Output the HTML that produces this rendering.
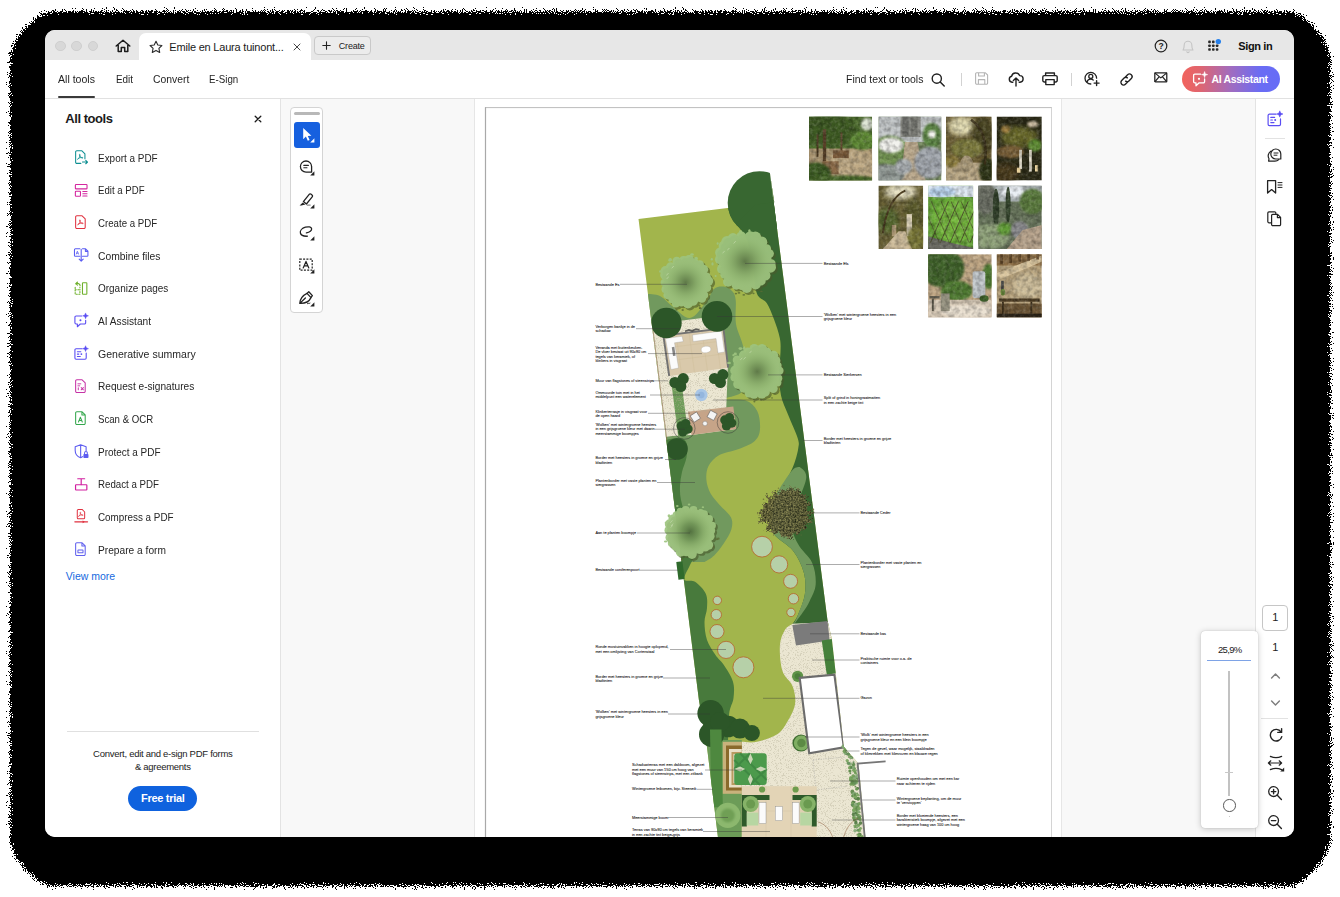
<!DOCTYPE html>
<html>
<head>
<meta charset="utf-8">
<style>
*{box-sizing:border-box;margin:0;padding:0}
html,body{width:1340px;height:897px;overflow:hidden;background:#fff;font-family:"Liberation Sans",sans-serif;color:#222}
#shadow{position:absolute;left:9px;top:12px;width:1320px;height:873px;background:#000;border-radius:46px}
#win{position:absolute;left:45.3px;top:30px;width:1249px;height:806.6px;background:#fff;border-radius:10px;overflow:hidden}
#titlebar{position:absolute;left:0;top:0;width:1250px;height:29.6px;background:#e7e7e7}
.tl{position:absolute;top:10.6px;width:10.4px;height:10.4px;border-radius:50%;background:#d8d8d8;border:0.5px solid #cfcfcf}
#tab{position:absolute;left:94px;top:3px;width:172px;height:27px;background:#fff;border-radius:7px 7px 0 0}
#tab .t{position:absolute;left:30px;top:7.8px;font-size:11px;color:#1a1a1a;white-space:nowrap;letter-spacing:-0.2px}
#create{position:absolute;left:269px;top:6px;width:57px;height:19px;border:1px solid #c9c9c9;border-radius:4px;background:#ececec;font-size:9px;color:#222}
#toolbar{position:absolute;left:0;top:29.6px;width:1250px;height:39.4px;background:#fff;border-bottom:1px solid #e1e1e1}
.menu{position:absolute;top:13.5px;font-size:11px;color:#1f1f1f;white-space:nowrap;transform-origin:0 0}
#left{position:absolute;left:0;top:69px;width:236px;height:738px;background:#fff;border-right:1px solid #e3e3e3}
.tool{position:absolute;left:52.8px;font-size:10.5px;color:#262626;white-space:nowrap;line-height:14px;transform-origin:0 0}
.ico{position:absolute;left:27.9px;width:16.4px;height:16.4px}
#main{position:absolute;left:236px;top:69px;width:974px;height:738px;background:#f8f8f8}
#right{position:absolute;left:1209.5px;top:69px;width:41px;height:738px;background:#fff;border-left:1px solid #e3e3e3}
svg{position:absolute;overflow:visible}
.s{fill:none;stroke-linecap:round;stroke-linejoin:round}
</style>
</head>
<body>
<svg style="left:0;top:0" width="1340" height="897" viewBox="0 0 1340 897"><defs><filter id="dith" x="0" y="0" width="1340" height="897" filterUnits="userSpaceOnUse" color-interpolation-filters="sRGB"><feGaussianBlur in="SourceAlpha" stdDeviation="1.9 2.7" result="a"/><feTurbulence type="fractalNoise" baseFrequency="0.9" numOctaves="1" seed="4" result="n0"/><feComponentTransfer in="n0" result="n"><feFuncA type="linear" slope="2.6" intercept="-0.8"/></feComponentTransfer><feComposite in="a" in2="n" operator="arithmetic" k1="0" k2="1" k3="0.9" k4="-0.44" result="c"/><feComponentTransfer in="c" result="t"><feFuncA type="discrete" tableValues="0 1"/></feComponentTransfer><feFlood flood-color="#000"/><feComposite in2="t" operator="in"/></filter></defs><path d="M10 57.3 C10 40.7 36.9 11.3 52 11.3 H1288.3 C1303.4 11.3 1330.3 40.7 1330.3 57.3 V840 C1330.3 856.6 1303.4 886 1288.3 886 H52 C36.9 886 10 856.6 10 840 Z" fill="#000" filter="url(#dith)"/></svg>
<div id="win">
<div id="titlebar">
  <div class="tl" style="left:10px"></div><div class="tl" style="left:26px"></div><div class="tl" style="left:42.5px"></div>
  <svg style="left:70px;top:9px" width="16" height="14" viewBox="0 0 16 14"><path class="s" d="M1.2 7 L8 1.2 L14.8 7 M3.2 6 V12.4 H6.3 V8.6 H9.7 V12.4 H12.8 V6" stroke="#1c1c1c" stroke-width="1.5"/></svg>
  <div id="tab">
    <svg style="left:9.5px;top:6.5px" width="14" height="14" viewBox="0 0 14 14"><path class="s" d="M7 1.2 L8.8 5 L12.9 5.5 L9.9 8.3 L10.7 12.4 L7 10.4 L3.3 12.4 L4.1 8.3 L1.1 5.5 L5.2 5 Z" stroke="#2a2a2a" stroke-width="1.1"/></svg>
    <div class="t">Emile en Laura tuinont...</div>
    <svg style="left:154px;top:9.5px" width="8" height="8" viewBox="0 0 8 8"><path class="s" d="M1 1 L7 7 M7 1 L1 7" stroke="#3c3c3c" stroke-width="0.95"/></svg>
  </div>
  <div id="create">
    <svg style="left:7px;top:4px" width="9" height="9" viewBox="0 0 9 9"><path class="s" d="M4.5 0.8 V8.2 M0.8 4.5 H8.2" stroke="#222" stroke-width="1.1"/></svg>
    <span style="position:absolute;left:23.5px;top:3.5px;letter-spacing:-0.2px">Create</span>
  </div>
  <!-- right side -->
  <svg style="left:1109px;top:9px" width="14" height="14" viewBox="0 0 14 14"><circle cx="7" cy="7" r="5.8" fill="none" stroke="#222" stroke-width="1.2"/><text x="7" y="10" font-size="8.5" font-weight="bold" text-anchor="middle" fill="#222" font-family="Liberation Sans">?</text></svg>
  <svg style="left:1136px;top:9px" width="14" height="15" viewBox="0 0 14 15"><path class="s" d="M2 11 C3.2 9.5 3.2 8 3.2 6 A3.8 3.8 0 0 1 10.8 6 C10.8 8 10.8 9.5 12 11 Z M5.8 12.8 A1.3 1.3 0 0 0 8.2 12.8" stroke="#c4c4c4" stroke-width="1.1"/></svg>
  <svg style="left:1162px;top:9px" width="16" height="14" viewBox="0 0 16 14">
    <g fill="#2a2a2a"><rect x="1.2" y="1.6" width="2.6" height="2.6" rx="0.8"/><rect x="5" y="1.6" width="2.6" height="2.6" rx="0.8"/>
    <rect x="1.2" y="5.4" width="2.6" height="2.6" rx="0.8"/><rect x="5" y="5.4" width="2.6" height="2.6" rx="0.8"/><rect x="8.8" y="5.4" width="2.6" height="2.6" rx="0.8"/>
    <rect x="1.2" y="9.2" width="2.6" height="2.6" rx="0.8"/><rect x="5" y="9.2" width="2.6" height="2.6" rx="0.8"/><rect x="8.8" y="9.2" width="2.6" height="2.6" rx="0.8"/></g>
    <circle cx="11.3" cy="2.6" r="2.7" fill="#2680eb"/></svg>
  <div style="position:absolute;left:1193px;top:10px;font-size:11px;font-weight:bold;color:#111;white-space:nowrap;letter-spacing:-0.38px">Sign in</div>
</div>
<div id="toolbar">
  <div class="menu" style="left:13.2px;transform:scaleX(0.96)">All tools</div>
  <div class="menu" style="left:70.4px;transform:scaleX(0.90)">Edit</div>
  <div class="menu" style="left:107.7px;transform:scaleX(0.942)">Convert</div>
  <div class="menu" style="left:163.6px;transform:scaleX(0.885)">E-Sign</div>
  <div style="position:absolute;left:13px;top:36.4px;width:37px;height:2px;background:#3a3a3a;border-radius:1px"></div>
  <div class="menu" style="left:801px;transform:scaleX(0.952)">Find text or tools</div>
  <!-- search -->
  <svg style="left:885px;top:12.4px" width="16" height="16" viewBox="0 0 16 16"><circle cx="6.8" cy="6.6" r="4.6" fill="none" stroke="#222" stroke-width="1.4"/><path class="s" d="M10.2 10 L14.2 14" stroke="#222" stroke-width="1.5"/></svg>
  <div style="position:absolute;left:916px;top:13.4px;width:1px;height:13px;background:#d2d2d2"></div>
  <!-- save (disabled) -->
  <svg style="left:930px;top:12.9px" width="14" height="13" viewBox="0 0 14 13"><path class="s" d="M1.6 0.8 H10.4 L12.6 3 V11 A1.2 1.2 0 0 1 11.4 12.2 H1.8 A1.2 1.2 0 0 1 0.6 11 V1.8 A1 1 0 0 1 1.6 0.8 Z M3.6 0.8 V4 H9.4 V0.8 M3.4 12 V7.6 H9.8 V12" stroke="#b4b4b4" stroke-width="1.1"/></svg>
  <!-- cloud upload -->
  <svg style="left:963px;top:12.4px" width="16" height="15" viewBox="0 0 16 15"><path class="s" d="M4.8 10.2 H4 A3 3 0 0 1 3.6 4.3 A4.2 4.2 0 0 1 11.6 3.6 A3.3 3.3 0 0 1 12 10.2 H11.2 M8 14 V6.2 M5.4 8.6 L8 6 L10.6 8.6" stroke="#222" stroke-width="1.4"/></svg>
  <!-- printer -->
  <svg style="left:997px;top:12.9px" width="16" height="14" viewBox="0 0 16 14"><path class="s" d="M3.6 3.6 V1 H12.4 V3.6 M3.6 10 H2.2 A1.4 1.4 0 0 1 0.8 8.6 V5 A1.4 1.4 0 0 1 2.2 3.6 H13.8 A1.4 1.4 0 0 1 15.2 5 V8.6 A1.4 1.4 0 0 1 13.8 10 H12.4 M3.8 7.6 H12.2 V12.6 H3.8 Z" stroke="#222" stroke-width="1.4"/></svg>
  <div style="position:absolute;left:1026px;top:13.4px;width:1px;height:13px;background:#d2d2d2"></div>
  <!-- share person -->
  <svg style="left:1039px;top:11.9px" width="17" height="16" viewBox="0 0 17 16"><path class="s" d="M12.6 7.2 A5.8 5.8 0 1 0 6.8 13 M3 11 C3.6 9 5.2 8.2 6.8 8.2 C7.8 8.2 8.6 8.5 9.2 9" stroke="#222" stroke-width="1.3"/><circle cx="6.8" cy="5.4" r="2" fill="none" stroke="#222" stroke-width="1.3"/><path class="s" d="M12.6 9.6 V14.6 M10.1 12.1 H15.1" stroke="#222" stroke-width="1.4"/></svg>
  <!-- link -->
  <svg style="left:1074px;top:12.4px" width="15" height="15" viewBox="0 0 15 15"><path class="s" d="M6.2 5.2 L8.6 2.8 A2.6 2.6 0 0 1 12.3 6.5 L9.9 8.9 A2.6 2.6 0 0 1 6.6 9.2 M8.8 9.8 L6.4 12.2 A2.6 2.6 0 0 1 2.7 8.5 L5.1 6.1 A2.6 2.6 0 0 1 8.4 5.8" stroke="#222" stroke-width="1.4"/></svg>
  <!-- mail -->
  <svg style="left:1108.5px;top:12.6px" width="13.6" height="11" viewBox="0 0 15 12"><rect x="0.9" y="0.9" width="13.2" height="9.8" rx="0.6" fill="none" stroke="#222" stroke-width="1.4"/><path class="s" d="M1.2 1.2 L7.5 6.4 L13.8 1.2 M1.2 10.4 L5.6 5.4 M13.8 10.4 L9.4 5.4" stroke="#222" stroke-width="1.3"/></svg>
  <!-- AI Assistant button -->
  <div style="position:absolute;left:1137px;top:6.4px;width:98px;height:26px;border-radius:13px;background:linear-gradient(90deg,#f2635c 0%,#e0656f 18%,#a06cc0 50%,#6a6cf4 80%,#666cf6 100%)">
    <svg style="left:10px;top:5px" width="17" height="17" viewBox="0 0 17 17"><path class="s" d="M8.6 3.2 H2.8 A1.2 1.2 0 0 0 1.6 4.4 V10.6 A1.2 1.2 0 0 0 2.8 11.8 H4 V14.8 L7.2 11.8 H11.4 A1.2 1.2 0 0 0 12.6 10.6 V8" stroke="#fff" stroke-width="1.3"/><circle cx="7" cy="7.8" r="1.1" fill="#fff"/><path d="M12.6 0.6 L13.3 2.9 L15.6 3.6 L13.3 4.3 L12.6 6.6 L11.9 4.3 L9.6 3.6 L11.9 2.9 Z" fill="#fff" stroke="#fff" stroke-width="0.6" stroke-linejoin="round"/></svg>
    <div style="position:absolute;left:29.3px;top:7px;font-size:10.5px;font-weight:bold;color:#fff;white-space:nowrap;letter-spacing:-0.36px">AI Assistant</div>
  </div>
</div>
<div id="left">
<div style="position:absolute;left:20px;top:12px;font-size:13px;font-weight:bold;color:#1b1b1b;letter-spacing:-0.45px;white-space:nowrap">All tools</div>
<svg style="left:208.5px;top:16.2px" width="8" height="8" viewBox="0 0 8 8"><path class="s" d="M1.2 1.2 L6.8 6.8 M6.8 1.2 L1.2 6.8" stroke="#1b1b1b" stroke-width="1.3"/></svg>
<svg class="ico" style="top:49.8px" viewBox="0 0 18 18" stroke="#0e8f92"><path class="s" d="M8.6 15.8 H4.2 A1.3 1.3 0 0 1 2.9 14.5 V3.3 A1.3 1.3 0 0 1 4.2 2 H9.8 L13.1 5.3 V10.6" stroke-width="1.15"/><path class="s" transform="translate(5.3,5.6) scale(1)" d="M0 5.4 C1.6 4.8 2.5 2.2 2.5 0.8 C2.5 0 1.7 0 1.7 0.8 C1.7 2.4 3.8 4.4 5.2 4.4 C6 4.4 5.8 3.6 4.8 3.6 C3.2 3.6 1 4.2 0 5.4 Z" stroke-width="0.9"/><path class="s" d="M10.4 14.3 H16 M14 12.4 L16 14.3 L14 16.2" stroke-width="1.2"/></svg>
<div class="tool" style="top:51.5px;transform:scaleX(0.947)">Export a PDF</div>
<svg class="ico" style="top:82.5px" viewBox="0 0 18 18" stroke="#d4269f"><rect class="s" x="2.6" y="2.8" width="12.8" height="4.8" rx="0.8" stroke-width="1.2"/><rect class="s" x="2.6" y="10.2" width="5.6" height="5.4" rx="0.8" stroke-width="1.2"/><path class="s" d="M10.8 10.4 H15.4 M10.8 12.9 H15.4 M10.8 15.4 H15.4" stroke-width="1.2"/></svg>
<div class="tool" style="top:84.2px;transform:scaleX(0.916)">Edit a PDF</div>
<svg class="ico" style="top:115.1px" viewBox="0 0 18 18" stroke="#e0313f"><path class="s" d="M4.2 2 H10 L13.4 5.4 V14.6 A1.3 1.3 0 0 1 12.1 15.9 H4.2 A1.3 1.3 0 0 1 2.9 14.6 V3.3 A1.3 1.3 0 0 1 4.2 2 Z" stroke-width="1.15"/><path class="s" transform="translate(5.5,6.2) scale(1)" d="M0 5.4 C1.6 4.8 2.5 2.2 2.5 0.8 C2.5 0 1.7 0 1.7 0.8 C1.7 2.4 3.8 4.4 5.2 4.4 C6 4.4 5.8 3.6 4.8 3.6 C3.2 3.6 1 4.2 0 5.4 Z" stroke-width="0.9"/></svg>
<div class="tool" style="top:116.8px;transform:scaleX(0.921)">Create a PDF</div>
<svg class="ico" style="top:147.8px" viewBox="0 0 18 18" stroke="#5a5cf2"><path class="s" d="M7.6 10.2 H2.6 A1 1 0 0 1 1.6 9.2 V3 A1 1 0 0 1 2.6 2 H7.6 M10.4 2 H13.8 L16.4 4.6 V9.2 A1 1 0 0 1 15.4 10.2 H10.4 M13.6 2.2 V4.8 H16.2" stroke-width="1.15"/><path class="s" d="M9 2.4 V15.4 M6.8 13.4 L9 15.6 L11.2 13.4" stroke-width="1.2"/><path class="s" d="M3.6 7.8 L4.8 4.6 L6 7.8 M4 6.8 H5.6" stroke-width="0.8"/></svg>
<div class="tool" style="top:149.5px;transform:scaleX(0.982)">Combine files</div>
<svg class="ico" style="top:180.5px" viewBox="0 0 18 18" stroke="#6fb12c"><rect class="s" x="10.4" y="3" width="4.8" height="12.6" rx="0.6" stroke-width="1.2"/><path class="s" d="M2.4 8 V15.6 H7.6 V8" stroke-width="1.2" stroke-dasharray="1.2 1.7"/><path class="s" d="M2.4 10.6 H7.6" stroke-width="1.1" stroke-dasharray="1.2 1.7"/><path class="s" d="M7.8 6.4 C7.8 4 5.6 3.2 3.4 4 M4.8 2.2 L3 4.1 L5 5.6" stroke-width="1.2"/></svg>
<div class="tool" style="top:182.2px;transform:scaleX(0.948)">Organize pages</div>
<svg class="ico" style="top:213.2px" viewBox="0 0 18 18" stroke="#5a4df3"><path class="s" d="M9.6 4.4 H3.4 A1.3 1.3 0 0 0 2.1 5.7 V11.9 A1.3 1.3 0 0 0 3.4 13.2 H4.8 V16.2 L8 13.2 H12.6 A1.3 1.3 0 0 0 13.9 11.9 V9" stroke-width="1.2"/><circle cx="8.2" cy="9" r="1.1" fill="#5a4df3" stroke="none"/><path d="M13.8 1.0 L14.696000000000002 3.3040000000000003 L17.0 4.2 L14.696000000000002 5.096 L13.8 7.4 L12.904 5.096 L10.600000000000001 4.2 L12.904 3.3040000000000003 Z" fill="#5a4df3" stroke="#5a4df3" stroke-width="0.5" stroke-linejoin="round"/></svg>
<div class="tool" style="top:214.9px;transform:scaleX(0.966)">AI Assistant</div>
<svg class="ico" style="top:245.8px" viewBox="0 0 18 18" stroke="#5a4df3"><path class="s" d="M10 4.2 H3.4 A1.3 1.3 0 0 0 2.1 5.5 V14.3 A1.3 1.3 0 0 0 3.4 15.6 H13.2 A1.3 1.3 0 0 0 14.5 14.3 V8.8" stroke-width="1.2"/><path class="s" d="M4.8 7.4 H8.6 M4.8 10 H6.4 M4.8 12.6 H8" stroke-width="1.2"/><circle cx="9.2" cy="10" r="1" fill="#5a4df3" stroke="none"/><path d="M13.8 0.7999999999999998 L14.696000000000002 3.104 L17.0 4 L14.696000000000002 4.896 L13.8 7.2 L12.904 4.896 L10.600000000000001 4 L12.904 3.104 Z" fill="#5a4df3" stroke="#5a4df3" stroke-width="0.5" stroke-linejoin="round"/></svg>
<div class="tool" style="top:247.5px;transform:scaleX(1.002)">Generative summary</div>
<svg class="ico" style="top:278.5px" viewBox="0 0 18 18" stroke="#c633a6"><path class="s" d="M4.2 2 H10 L13.4 5.4 V14.6 A1.3 1.3 0 0 1 12.1 15.9 H4.2 A1.3 1.3 0 0 1 2.9 14.6 V3.3 A1.3 1.3 0 0 1 4.2 2 Z" stroke-width="1.15"/><path class="s" d="M5.4 6.4 H8.6 M5.4 8.6 H7.4" stroke-width="1"/><path class="s" d="M9 10.6 L11.4 13 M11.4 10.6 L9 13 M5.8 10.6 V13" stroke-width="1.1"/></svg>
<div class="tool" style="top:280.2px;transform:scaleX(0.964)">Request e-signatures</div>
<svg class="ico" style="top:311.2px" viewBox="0 0 18 18" stroke="#34a74d"><path class="s" d="M4.2 2 H10 L13.4 5.4 V14.6 A1.3 1.3 0 0 1 12.1 15.9 H4.2 A1.3 1.3 0 0 1 2.9 14.6 V3.3 A1.3 1.3 0 0 1 4.2 2 Z M9.8 2.2 V5.6 H13.2" stroke-width="1.15"/><path class="s" d="M6 13.2 L8.1 8 L10.2 13.2 M6.8 11.4 H9.4" stroke-width="1.1"/></svg>
<div class="tool" style="top:312.9px;transform:scaleX(0.918)">Scan &amp; OCR</div>
<svg class="ico" style="top:343.8px" viewBox="0 0 18 18" stroke="#5c5cf0"><path class="s" d="M10.6 15 C9.8 15.6 9 16 8.4 16.2 C4.6 14.8 2.4 12 2.4 8.2 V4.2 L8.4 2 L14.4 4.2 V8.4 M8.4 2.2 V16" stroke-width="1.2"/><rect x="11.4" y="12" width="5.6" height="4.6" rx="0.9" fill="#5c5cf0" stroke="none"/><path class="s" d="M12.7 12 V10.9 A1.5 1.5 0 0 1 15.7 10.9 V12" stroke-width="1.1"/></svg>
<div class="tool" style="top:345.5px;transform:scaleX(0.948)">Protect a PDF</div>
<svg class="ico" style="top:376.5px" viewBox="0 0 18 18" stroke="#d11fa0"><rect class="s" x="2.8" y="9.6" width="12.4" height="5.8" rx="0.6" stroke-width="1.3"/><path class="s" d="M5.2 3 H12.8 M9 3 V9.4" stroke-width="1.3"/></svg>
<div class="tool" style="top:378.2px;transform:scaleX(0.925)">Redact a PDF</div>
<svg class="ico" style="top:409.2px" viewBox="0 0 18 18" stroke="#e0313f"><path class="s" d="M5.8 1.6 H10 L12.8 4.4 V10.8 A1.1 1.1 0 0 1 11.7 11.9 H5.8 A1.1 1.1 0 0 1 4.7 10.8 V2.7 A1.1 1.1 0 0 1 5.8 1.6 Z" stroke-width="1.1"/><path class="s" transform="translate(6.3,4.4) scale(0.85)" d="M0 5.4 C1.6 4.8 2.5 2.2 2.5 0.8 C2.5 0 1.7 0 1.7 0.8 C1.7 2.4 3.8 4.4 5.2 4.4 C6 4.4 5.8 3.6 4.8 3.6 C3.2 3.6 1 4.2 0 5.4 Z" stroke-width="0.9"/><path class="s" d="M2 15.2 H16" stroke-width="1.2"/><path d="M10.6 13.6 L13 15.2 L10.6 16.8 Z" fill="#e0313f" stroke="none"/></svg>
<div class="tool" style="top:410.9px;transform:scaleX(0.938)">Compress a PDF</div>
<svg class="ico" style="top:441.8px" viewBox="0 0 18 18" stroke="#6161ee"><path class="s" d="M4.2 2 H10 L13.4 5.4 V14.6 A1.3 1.3 0 0 1 12.1 15.9 H4.2 A1.3 1.3 0 0 1 2.9 14.6 V3.3 A1.3 1.3 0 0 1 4.2 2 Z M9.8 2.2 V5.6 H13.2" stroke-width="1.15"/><rect class="s" x="5.4" y="10" width="5.6" height="3" rx="0.5" stroke-width="1.1"/></svg>
<div class="tool" style="top:443.5px;transform:scaleX(0.970)">Prepare a form</div>
<div style="position:absolute;left:20.5px;top:469.5px;font-size:10.5px;color:#1669de;white-space:nowrap;line-height:14px">View more</div>
<div style="position:absolute;left:22px;top:632px;width:192px;height:1px;background:#e0e0e0"></div>
<div style="position:absolute;left:0;top:649px;width:235px;text-align:center;font-size:9.5px;line-height:12.5px;color:#222;letter-spacing:-0.28px">Convert, edit and e-sign PDF forms<br>&amp; agreements</div>
<div style="position:absolute;left:83px;top:687px;width:69px;height:25px;border-radius:12.5px;background:#0f62de;color:#fff;font-size:11px;font-weight:bold;text-align:center;line-height:25px;letter-spacing:-0.3px">Free trial</div>
</div>
<div id="main">
<div style="position:absolute;left:9px;top:8.4px;width:33px;height:206px;background:#fff;border:1px solid #d4d4d4;border-radius:4px"></div>
<div style="position:absolute;left:13px;top:12.6px;width:25.5px;height:3px;border-radius:1.5px;background:#b8b8b8"></div>
<div style="position:absolute;left:12.7px;top:22.5px;width:26px;height:26px;border-radius:3px;background:#1660df"></div>
<svg style="left:16.0px;top:26.1px" width="19" height="19" viewBox="0 0 19 19"><path d="M6.2 3 L6.2 14.2 L8.9 11.6 L10.8 15.8 L12.6 15 L10.8 10.9 L14.4 10.7 Z" fill="#fff"/><path d="M17.4 13.2 V17.4 H13.2 Z" fill="#fff"/></svg>
<svg style="left:16.0px;top:59.1px" width="19" height="19" viewBox="0 0 19 19"><path class="s" d="M9 3 A5.6 5.6 0 1 0 9 14.2 H14.6 V8.6 A5.6 5.6 0 0 0 9 3 Z" stroke="#222" stroke-width="1.3"/><path class="s" d="M6.8 7.4 H11.4 M6.8 9.8 H10" stroke="#222" stroke-width="1.1"/><path d="M17.4 13.2 V17.4 H13.2 Z" fill="#222"/></svg>
<svg style="left:16.0px;top:92px" width="19" height="19" viewBox="0 0 19 19"><path class="s" d="M6.4 10.6 L12.2 3.4 A1.4 1.4 0 0 1 14.2 3.2 L15 3.9 A1.4 1.4 0 0 1 15.2 5.9 L9.4 13 Z" stroke="#222" stroke-width="1.3"/><path d="M5.8 11.4 L8.4 13.6 L4.4 14.4 L2.6 14.4 Z" fill="#222"/><path d="M9.8 14.2 H13.6" stroke="#888" stroke-width="1.3"/><path d="M17.4 13.2 V17.4 H13.2 Z" fill="#222"/></svg>
<svg style="left:16.0px;top:124.3px" width="19" height="19" viewBox="0 0 19 19"><path class="s" d="M9.4 9.8 C12.6 9.4 15 7.6 14.6 5.6 C14.2 3.8 11.4 3.4 8.4 4.2 C5 5.2 2.8 7.6 3.4 10 C4 12.2 7 13.4 10.4 13.2" stroke="#222" stroke-width="1.3"/><path d="M17.4 13.2 V17.4 H13.2 Z" fill="#222"/></svg>
<svg style="left:16.0px;top:156.8px" width="19" height="19" viewBox="0 0 19 19"><rect x="2.8" y="3.2" width="12.4" height="11" fill="none" stroke="#222" stroke-width="1.2" stroke-dasharray="2 1.3"/><path class="s" d="M6.2 12 L9 5.4 L11.8 12 M7.2 9.8 H10.8" stroke="#222" stroke-width="1.2"/><path d="M17.4 13.2 V17.4 H13.2 Z" fill="#222"/></svg>
<svg style="left:16.0px;top:190px" width="19" height="19" viewBox="0 0 19 19"><path class="s" d="M2.8 14.4 C3 10.4 5.6 6.6 10 4.4 L14 8.6 C12 12.8 8 14.6 2.8 14.4 Z M2.8 14.4 L8.4 9" stroke="#222" stroke-width="1.3"/><path class="s" d="M10.2 4.2 L11.8 2.8 L15.4 6.6 L14 8.4" stroke="#222" stroke-width="1.3"/><path class="s" d="M10.4 14.6 C11.4 13.6 12 15 13 14.2" stroke="#222" stroke-width="1"/><path d="M17.4 13.2 V17.4 H13.2 Z" fill="#222"/></svg>
<div style="position:absolute;left:192.4px;top:0;width:587.9px;height:738px;background:#fff;border-left:1px solid #e6e6e6;border-right:1px solid #e6e6e6"></div>
</div>
<svg style="left:-45px;top:-30px" width="1340" height="897" viewBox="0 0 1340 897">
<defs>
<clipPath id="pageclip"><rect x="485" y="107" width="567" height="731"/></clipPath>
<clipPath id="gclip"><polygon points="638.5,219 774.2,202.2 769.6,170.7 827.5,620.5 831.9,639 835.7,673.3 843.8,746.9 858.5,763.4 866.5,850 719.6,850 717.8,836 707,747 698.9,700"/></clipPath>
<filter id="spk" x="0" y="0" width="100%" height="100%"><feTurbulence type="fractalNoise" baseFrequency="1.4" numOctaves="1" seed="3" result="n"/><feColorMatrix in="n" type="matrix" values="0 0 0 0 0.45  0 0 0 0 0.42  0 0 0 0 0.3  0 0 0 -9 4.1"/><feComposite operator="in" in2="SourceGraphic"/></filter>
<filter id="b1"><feGaussianBlur stdDeviation="1.2"/></filter><filter id="b2"><feGaussianBlur stdDeviation="2.5"/></filter><filter id="b05"><feGaussianBlur stdDeviation="0.6"/></filter>
<radialGradient id="tree"><stop offset="0" stop-color="#5c7646" stop-opacity="0.95"/><stop offset="0.3" stop-color="#6f8f54" stop-opacity="0.75"/><stop offset="0.7" stop-color="#86ab66" stop-opacity="0.3"/><stop offset="1" stop-color="#9ec47f" stop-opacity="0"/></radialGradient>
<radialGradient id="tree2"><stop offset="0" stop-color="#4f6d3d" stop-opacity="0.95"/><stop offset="0.35" stop-color="#668a4e" stop-opacity="0.75"/><stop offset="0.75" stop-color="#86ab66" stop-opacity="0.3"/><stop offset="1" stop-color="#9ec47f" stop-opacity="0"/></radialGradient>
<radialGradient id="cedar"><stop offset="0" stop-color="#4a4a28"/><stop offset="0.6" stop-color="#5d5b33"/><stop offset="1" stop-color="#6f6c40" stop-opacity="0.85"/></radialGradient>
</defs>
<rect x="485.5" y="107.5" width="566" height="740" fill="#fff"/>
<path d="M485 107.6 H1052" stroke="#bcbcbc" stroke-width="1" fill="none"/>
<path d="M1051.5 107.5 V840" stroke="#d4d4d4" stroke-width="1" fill="none"/>
<path d="M485.5 107.2 V840" stroke="#a9a9a9" stroke-width="1.2" fill="none"/>
<g clip-path="url(#pageclip)">
<g clip-path="url(#gclip)">
<rect x="600" y="160" width="300" height="700" fill="#a2b54c"/>
<circle cx="759.5" cy="203" r="31.8" fill="#386731"/>
</g>
<clipPath id="rclip"><polygon points="600,160 768.2,160 857,850 600,850"/></clipPath>
<g clip-path="url(#rclip)"><circle cx="759.5" cy="203" r="31.8" fill="#386731"/></g>
<g clip-path="url(#gclip)">
<path d="M736 224 C737.8 226.7 744.2 232.7 747 240 C749.8 247.3 751.3 259.1 753 268 C754.7 276.9 754.7 287.9 757 293.7 C759.3 299.5 763.9 298.8 766.7 303 C769.5 307.2 771.7 313.2 773.9 319 C776.1 324.8 778.7 332.5 779.8 338 C780.9 343.5 780.6 346.3 780.5 352 C780.4 357.7 778.9 364.8 779 372 C779.1 379.2 779.5 388.4 781 395.5 C782.5 402.6 785.2 407.4 788 414.6 C790.8 421.8 796.1 432.9 797.8 438.5 C799.5 444.1 798.7 444.4 798.3 448 C797.9 451.6 796.7 456 795.4 460 C794.1 464 793 467.2 790.6 472 C788.2 476.8 783.6 484 781 488.7 C778.4 493.4 776.5 495.3 775 500 C773.5 504.7 772.2 511.3 772 517 C771.8 522.7 770.4 528.4 773.9 534 C777.4 539.6 788 544.3 793 550.7 C798 557.1 801.7 565 803.7 572.2 C805.7 579.4 805.9 586.5 804.9 593.7 C803.9 600.9 800.1 609.8 797.8 615.2 C795.5 620.6 792.1 624.2 791 626 L830 626 L830.4 620 L776.4 200 L760 200 Z" fill="#386731"/>
<path d="M800 467 C798.8 467.4 796.2 466.3 793 469.5 C789.8 472.7 784 481.6 781 486.3 C778 491.1 776.5 492.9 775 498 C773.5 503.1 772.2 511 772 517 C771.8 523 770.4 528.4 773.9 534 C777.4 539.6 788 544.3 793 550.7 C798 557.1 801.7 565 803.7 572.2 C805.7 579.4 805.9 586.5 804.9 593.7 C803.9 600.9 799.8 610 797.8 615.2 C795.8 620.4 793.8 623.2 793 624.8 L795.4 622.4 C796.6 620.8 800.1 616.4 802.5 612.8 C804.9 609.2 807.5 605.7 809.7 600.9 C811.9 596.1 815.3 590.6 815.7 584.2 C816.1 577.8 815.1 569.5 812.1 562.7 C809.1 555.9 801.1 550.7 797.8 543.6 C794.4 536.5 790.6 530.8 792 520 C793.4 509.2 804.8 487.9 806.1 479.1 C807.4 470.3 801 469 800 467 Z" fill="#71995e"/>
<path d="M645.9 293.7 C648.2 294.1 655.6 293.9 660 296 C664.4 298.1 667 302.3 672 306 C677 309.7 684.3 318.7 690 318 C695.7 317.3 702 306.8 706 302 C710 297.2 711 291.6 714 289 C717 286.4 720.7 286.3 723.7 286.6 C726.7 286.9 730 288.8 732 291 C734 293.2 735 294.5 735.7 300 C736.4 305.5 734.8 316.5 736 324 C737.2 331.5 740.8 337 742.8 345 C744.8 353 748.1 364.2 748 372 C747.9 379.8 746 387.5 742 392 C738 396.5 723.2 397.7 723.7 399.1 C724.2 400.5 739.6 398.3 745.2 400.3 C750.8 402.3 754.7 406.2 757.2 411 C759.7 415.8 760.4 424 760 429 C759.6 434 758.5 437.5 754.8 440.9 C751.1 444.3 744 446.9 738 449.3 C732 451.7 723.9 452.4 719 455.2 C714.1 458 710.6 461.9 708.5 466 C706.4 470.1 706 475.4 706.4 480 C706.8 484.6 708.3 489.2 710.6 493.4 C712.9 497.6 716.7 501.4 720.1 505.4 C723.5 509.4 729 513.3 730.9 517.3 C732.8 521.3 732.6 524.9 731.4 529.3 C730.2 533.7 726.6 539.2 723.7 543.6 C720.8 548 717.4 552.4 714.2 555.5 C711 558.6 706.2 560.9 704.6 562 L679.5 562 Z" fill="#71995e"/>
<path d="M664.2 440 C666.9 439.7 676.3 437.4 680 438 C683.7 438.6 685.6 440 686.7 443.3 C687.8 446.6 687.3 452.8 686.5 457.6 C685.7 462.4 683.1 467.3 682 472 C680.9 476.7 680.2 481.3 680 486 C679.8 490.7 680 495.2 681 500 C682 504.8 683.7 510.7 686 515 C688.3 519.3 692.7 521 695 526 C697.3 531 700.8 538.5 700 545 C699.2 551.5 692.6 559.3 690 565 C687.4 570.7 683.5 576.6 684.3 579.4 C685.1 582.2 691.4 579.4 695 581.8 C698.6 584.2 703.8 589.3 705.8 593.7 C707.8 598.1 707.2 603.3 707 608 C706.8 612.7 704.5 616.7 704.5 622 C704.5 627.3 705.2 634.5 707 640 C708.8 645.5 712.8 650.9 715.5 655 C718.2 659.1 720.6 660.1 723.5 664.5 C726.4 668.9 731.2 675.9 732.9 681.5 C734.6 687.1 734.1 692.5 733.5 697.9 C732.9 703.3 730 706.1 729.1 714 C728.2 721.9 728.2 739.8 728 745 L702.5 745 Z" fill="#487a3c"/>
<polygon points="650.4,324.5 702.2,317.9 722.5,328.2 727.8,368.1 726.1,412.2 736.2,429 691.5,434.9 672.4,436.1 664.9,437" fill="#ebe6d2"/>
<polygon points="670.8,378.6 680.8,377.3 688.2,434.6 678.2,436.2" fill="#6f9d5a"/>
<polygon points="687.9,411.8 733.3,406.5 736.2,429 691.5,434.9" fill="#c6a488"/>
<path d="M792.5 623.8 C791.2 624.8 787 626.4 784.9 630 C782.8 633.6 780.3 638.6 779.9 645.4 C779.5 652.2 780.3 663.9 782.4 670.7 C784.5 677.5 790.4 680.5 792.5 686 C794.6 691.5 795.9 697.8 795.1 703.7 C794.3 709.6 790.5 716.4 787.5 721.5 C784.5 726.6 782.4 730.8 777.3 734.2 C772.2 737.6 762.9 740.5 757 741.8 C751.1 743.1 744.3 741.8 741.8 741.8 L741.8 850 L870 850 L860 763 L845 747 L836 673 L830 622 Z" fill="#ebe6d2"/>
<polygon points="700,740 741.8,740 741.8,850 700,850" fill="#6c9c58"/>
<g filter="url(#spk)" opacity="0.38"><polygon points="650.4,324.5 702.2,317.9 722.5,328.2 727.8,368.1 726.1,412.2 688,412.2 672.4,436.1 664.9,437" fill="#000"/><path d="M792.5 623.8 C791.2 624.8 787 626.4 784.9 630 C782.8 633.6 780.3 638.6 779.9 645.4 C779.5 652.2 780.3 663.9 782.4 670.7 C784.5 677.5 790.4 680.5 792.5 686 C794.6 691.5 795.9 697.8 795.1 703.7 C794.3 709.6 790.5 716.4 787.5 721.5 C784.5 726.6 782.4 730.8 777.3 734.2 C772.2 737.6 762.9 740.5 757 741.8 C751.1 743.1 744.3 741.8 741.8 741.8 L741.8 850 L870 850 L860 763 L845 747 L836 673 L830 622 Z" fill="#000"/></g>
<polygon points="663.4,335.6 723.4,328.2 728.1,367.7 669.2,376" fill="#d9c9ab"/>
<path d="M676 334 L681.5 374 M689 332.5 L694.5 372.5 M702 331 L707.5 371 M715 329.3 L720.5 369 M665.2 348 L725 340.6 M667 361 L726.6 353.6" stroke="#cbb994" stroke-width="0.35" fill="none"/>
<polyline points="669.2,376 663.4,335.6 723.4,328.2 728.1,367.7" fill="none" stroke="#727272" stroke-width="1.9" stroke-linejoin="miter"/>
<polygon points="665.5,338.5 682,336.3 683.3,341.5 674.5,342.8 678.5,368 671,369.5" fill="#fbfbfb" stroke="#999" stroke-width="0.3"/>
<polygon points="692.5,335 721.5,331 724.5,352 718,353 716,338.5 693.2,341.5" fill="#fbfbfb" stroke="#999" stroke-width="0.3"/>
<ellipse cx="706" cy="349.5" rx="4.8" ry="3.2" fill="#fff" stroke="#aaa" stroke-width="0.3" transform="rotate(-8 706 349.5)"/>
<rect x="672.3" y="347" width="2.6" height="9" fill="#555" opacity="0.7" transform="rotate(-8 673 351)"/>
<path d="M685 331.3 l4 -1.4 l3 0.9 l4 -1.6 l3.5 0.6" stroke="#333" stroke-width="1.6" fill="none" opacity="0.75"/>
<path d="M652 322 L666.8 440" stroke="#8a6a4a" stroke-width="0.9" opacity="0.7"/>
<circle cx="666.4" cy="323" r="15.3" fill="#2c5628"/><circle cx="717" cy="316.4" r="15.3" fill="#2c5628"/>
<circle cx="674.9" cy="382.5" r="5.6" fill="#2c5628"/>
<circle cx="683.2" cy="378.7" r="5.6" fill="#2c5628"/>
<circle cx="680.8" cy="386.5" r="5.6" fill="#2c5628"/>
<circle cx="714.5" cy="378.5" r="5.6" fill="#2c5628"/>
<circle cx="722.8" cy="374.7" r="5.6" fill="#2c5628"/>
<circle cx="720.4" cy="382.5" r="5.6" fill="#2c5628"/>
<circle cx="701.3" cy="395" r="6.2" fill="#a9c6e6"/><circle cx="701.3" cy="395" r="3.2" fill="#8fb2dc" opacity="0.8"/>
<rect x="691.5" y="413.5" width="7.5" height="7.5" fill="#f4f4f4" stroke="#555" stroke-width="0.5" transform="rotate(-32 695 417)"/>
<rect x="708.5" y="411.5" width="7.5" height="7.5" fill="#f4f4f4" stroke="#555" stroke-width="0.5" transform="rotate(28 712 415)"/>
<circle cx="705" cy="423.5" r="2.3" fill="#f4f4f4" stroke="#777" stroke-width="0.4"/>
<circle cx="681.1" cy="425.9" r="4.6" fill="#2c5628"/>
<circle cx="688.1" cy="429.1" r="4.6" fill="#2c5628"/>
<circle cx="682.8" cy="431.9" r="4.6" fill="#2c5628"/>
<circle cx="685.8" cy="423.5" r="4.6" fill="#2c5628"/>
<circle cx="684.3" cy="428.5" r="10.8" fill="none" stroke="#333" stroke-width="0.45"/>
<circle cx="724.8" cy="419.9" r="4.6" fill="#2c5628"/>
<circle cx="731.8" cy="423.1" r="4.6" fill="#2c5628"/>
<circle cx="726.5" cy="425.9" r="4.6" fill="#2c5628"/>
<circle cx="729.5" cy="417.5" r="4.6" fill="#2c5628"/>
<circle cx="728" cy="422.5" r="10.8" fill="none" stroke="#333" stroke-width="0.45"/>
<circle cx="677" cy="449" r="10.8" fill="#2c5628"/>
</g>
<rect x="677.3" y="561.5" width="6.2" height="18" fill="#2f6a2c" transform="rotate(-7 680 570)"/>
<g clip-path="url(#gclip)">
<circle cx="762" cy="546.7" r="10.4" fill="#b6d0a8" stroke="#b8622c" stroke-width="0.8"/>
<circle cx="779.1" cy="564.4" r="8.6" fill="#b6d0a8" stroke="#b8622c" stroke-width="0.8"/>
<circle cx="790.6" cy="581.3" r="7" fill="#b6d0a8" stroke="#b8622c" stroke-width="0.8"/>
<circle cx="793.5" cy="598.7" r="5.2" fill="#b6d0a8" stroke="#b8622c" stroke-width="0.8"/>
<circle cx="791" cy="612.4" r="4.2" fill="#b6d0a8" stroke="#b8622c" stroke-width="0.8"/>
<circle cx="717.3" cy="600.4" r="4.2" fill="#b6d0a8" stroke="#b8622c" stroke-width="0.8"/>
<circle cx="716.3" cy="614.7" r="5.2" fill="#b6d0a8" stroke="#b8622c" stroke-width="0.8"/>
<circle cx="717" cy="631.5" r="7" fill="#b6d0a8" stroke="#b8622c" stroke-width="0.8"/>
<circle cx="726.1" cy="649.9" r="8.6" fill="#b6d0a8" stroke="#b8622c" stroke-width="0.8"/>
<circle cx="743.4" cy="667.3" r="10.5" fill="#b6d0a8" stroke="#b8622c" stroke-width="0.8"/>
<polygon points="792.3,625 827.6,621 829.6,640.5 796,645.6" fill="#7b7b7b"/>
<polygon points="821.7,640.6 831.9,639 836.2,673.3 826.8,674.8" fill="#45803a"/>
<circle cx="797.6" cy="676.3" r="5.6" fill="#5f9448"/><circle cx="797.6" cy="676.3" r="3" fill="#4c7f3b"/>
<circle cx="801" cy="743" r="8.6" fill="#3d6a30"/><circle cx="801.4" cy="743" r="7.6" fill="#7fae62"/><circle cx="801.4" cy="743" r="4.2" fill="#5b8a45" filter="url(#b05)"/>
<polygon points="799.7,677.9 834.4,674.6 843.8,747.3 809.2,753.2" fill="#fff" stroke="#6c6c6c" stroke-width="2.1"/>
<circle cx="858.2" cy="809.5" r="1.7" fill="#86a878" opacity="0.92"/>
<circle cx="856.9" cy="812.5" r="1.7" fill="#6d9a55" opacity="0.92"/>
<circle cx="859.5" cy="812.2" r="1" fill="#7aa560" opacity="0.92"/>
<circle cx="857.5" cy="834.6" r="1" fill="#6d9a55" opacity="0.92"/>
<circle cx="844.2" cy="747.3" r="1.2" fill="#7aa560" opacity="0.92"/>
<circle cx="853.5" cy="762.3" r="1" fill="#64905a" opacity="0.92"/>
<circle cx="852.3" cy="791.4" r="1.9" fill="#5f8a4c" opacity="0.92"/>
<circle cx="850.7" cy="767.4" r="1.9" fill="#6d9a55" opacity="0.92"/>
<circle cx="856.8" cy="775.5" r="1.4" fill="#86a878" opacity="0.92"/>
<circle cx="854.2" cy="809.8" r="1.9" fill="#6d9a55" opacity="0.92"/>
<circle cx="862" cy="844.6" r="1.2" fill="#557c45" opacity="0.92"/>
<circle cx="857.8" cy="788.3" r="1.2" fill="#557c45" opacity="0.92"/>
<circle cx="854.4" cy="776.7" r="0.9" fill="#86a878" opacity="0.92"/>
<circle cx="854" cy="818.2" r="1.3" fill="#557c45" opacity="0.92"/>
<circle cx="854" cy="795" r="1.4" fill="#86a878" opacity="0.92"/>
<circle cx="850.2" cy="764" r="1.8" fill="#86a878" opacity="0.92"/>
<circle cx="853.5" cy="782.5" r="1.4" fill="#7aa560" opacity="0.92"/>
<circle cx="854.8" cy="783.4" r="0.9" fill="#5f8a4c" opacity="0.92"/>
<circle cx="858" cy="818.2" r="1.9" fill="#5f8a4c" opacity="0.92"/>
<circle cx="860.6" cy="823.1" r="1.8" fill="#557c45" opacity="0.92"/>
<circle cx="858.4" cy="798.3" r="1.2" fill="#7aa560" opacity="0.92"/>
<circle cx="850.9" cy="757" r="1.7" fill="#557c45" opacity="0.92"/>
<circle cx="848.7" cy="749.7" r="1" fill="#557c45" opacity="0.92"/>
<circle cx="854.6" cy="798.3" r="1" fill="#557c45" opacity="0.92"/>
<circle cx="859.2" cy="840.3" r="1.2" fill="#557c45" opacity="0.92"/>
<circle cx="855.8" cy="777.2" r="1.5" fill="#86a878" opacity="0.92"/>
<circle cx="860.5" cy="816.3" r="1.1" fill="#5f8a4c" opacity="0.92"/>
<circle cx="848.8" cy="754.3" r="1.8" fill="#5f8a4c" opacity="0.92"/>
<circle cx="853.7" cy="770.2" r="1.7" fill="#7aa560" opacity="0.92"/>
<circle cx="854.1" cy="812.4" r="1.9" fill="#86a878" opacity="0.92"/>
<circle cx="846.3" cy="749.3" r="1.7" fill="#6d9a55" opacity="0.92"/>
<circle cx="859.8" cy="846.1" r="1" fill="#7aa560" opacity="0.92"/>
<circle cx="848.8" cy="756.9" r="1" fill="#7aa560" opacity="0.92"/>
<circle cx="853.2" cy="776.1" r="1.9" fill="#6d9a55" opacity="0.92"/>
<circle cx="858.9" cy="845.6" r="1.4" fill="#86a878" opacity="0.92"/>
<circle cx="852.2" cy="778.4" r="1.4" fill="#6d9a55" opacity="0.92"/>
<circle cx="851.6" cy="757.5" r="1.4" fill="#6d9a55" opacity="0.92"/>
<circle cx="856.5" cy="810" r="1.2" fill="#5f8a4c" opacity="0.92"/>
<circle cx="855.5" cy="796.2" r="1.4" fill="#64905a" opacity="0.92"/>
<circle cx="856.3" cy="782.9" r="1.7" fill="#86a878" opacity="0.92"/>
<circle cx="852.8" cy="805.9" r="1.2" fill="#64905a" opacity="0.92"/>
<circle cx="855.5" cy="817.9" r="1.4" fill="#86a878" opacity="0.92"/>
<circle cx="860.5" cy="819" r="1.2" fill="#6d9a55" opacity="0.92"/>
<circle cx="852.6" cy="805.2" r="1.4" fill="#557c45" opacity="0.92"/>
<circle cx="852.2" cy="779.2" r="1.2" fill="#64905a" opacity="0.92"/>
<circle cx="858.8" cy="812" r="1.2" fill="#86a878" opacity="0.92"/>
<circle cx="857.2" cy="781.2" r="1.3" fill="#6d9a55" opacity="0.92"/>
<circle cx="859.8" cy="834.7" r="1.9" fill="#557c45" opacity="0.92"/>
<circle cx="855.8" cy="798.9" r="1.1" fill="#557c45" opacity="0.92"/>
<circle cx="858.8" cy="841.6" r="1.6" fill="#86a878" opacity="0.92"/>
<circle cx="856.2" cy="814.4" r="1.5" fill="#64905a" opacity="0.92"/>
<circle cx="858.7" cy="798.7" r="1.2" fill="#64905a" opacity="0.92"/>
<circle cx="858.6" cy="825" r="1.6" fill="#5f8a4c" opacity="0.92"/>
<circle cx="853.3" cy="766" r="1.5" fill="#6d9a55" opacity="0.92"/>
<circle cx="854.2" cy="768.3" r="1.5" fill="#5f8a4c" opacity="0.92"/>
<circle cx="862.8" cy="846.6" r="1.1" fill="#6d9a55" opacity="0.92"/>
<circle cx="852.5" cy="757.3" r="1.4" fill="#64905a" opacity="0.92"/>
<circle cx="846.2" cy="749.6" r="1.3" fill="#64905a" opacity="0.92"/>
<circle cx="846.1" cy="753.3" r="1.6" fill="#557c45" opacity="0.92"/>
<circle cx="844.6" cy="746.1" r="1.2" fill="#7aa560" opacity="0.92"/>
<circle cx="859.7" cy="834.4" r="1.4" fill="#5f8a4c" opacity="0.92"/>
<circle cx="854.4" cy="802.1" r="1.2" fill="#64905a" opacity="0.92"/>
<circle cx="854.6" cy="780.6" r="1.9" fill="#6d9a55" opacity="0.92"/>
<circle cx="857" cy="788.7" r="1.5" fill="#557c45" opacity="0.92"/>
<circle cx="852.7" cy="793.7" r="1.3" fill="#7aa560" opacity="0.92"/>
<circle cx="862.5" cy="843.6" r="1.5" fill="#557c45" opacity="0.92"/>
<circle cx="859.2" cy="829.8" r="1.3" fill="#557c45" opacity="0.92"/>
<circle cx="856.8" cy="803.7" r="1" fill="#86a878" opacity="0.92"/>
<circle cx="858.9" cy="835.4" r="1.3" fill="#6d9a55" opacity="0.92"/>
<circle cx="855.3" cy="796.3" r="1.6" fill="#7aa560" opacity="0.92"/>
<circle cx="862.1" cy="844" r="1.5" fill="#557c45" opacity="0.92"/>
<circle cx="855.9" cy="821.6" r="1.2" fill="#5f8a4c" opacity="0.92"/>
<circle cx="857.3" cy="778.6" r="1.4" fill="#557c45" opacity="0.92"/>
<circle cx="847.2" cy="760.6" r="1.6" fill="#7aa560" opacity="0.92"/>
<circle cx="849.8" cy="771" r="1" fill="#7aa560" opacity="0.92"/>
<circle cx="845.7" cy="747.3" r="1.2" fill="#7aa560" opacity="0.92"/>
<circle cx="855.9" cy="825.8" r="1.2" fill="#6d9a55" opacity="0.92"/>
<circle cx="855.7" cy="819.6" r="1.4" fill="#7aa560" opacity="0.92"/>
<circle cx="858.2" cy="798.9" r="1.8" fill="#5f8a4c" opacity="0.92"/>
<circle cx="843.9" cy="747.6" r="1.2" fill="#86a878" opacity="0.92"/>
<circle cx="852.5" cy="780.3" r="1.4" fill="#7aa560" opacity="0.92"/>
<circle cx="855.4" cy="781.7" r="1.7" fill="#6d9a55" opacity="0.92"/>
<circle cx="845.2" cy="749.7" r="1.4" fill="#5f8a4c" opacity="0.92"/>
<circle cx="858.9" cy="836.6" r="0.9" fill="#7aa560" opacity="0.92"/>
<circle cx="857.6" cy="806.7" r="1.9" fill="#86a878" opacity="0.92"/>
<circle cx="858.3" cy="795.2" r="1.3" fill="#7aa560" opacity="0.92"/>
<circle cx="858.5" cy="815.6" r="1.8" fill="#7aa560" opacity="0.92"/>
<circle cx="855" cy="830.7" r="1.7" fill="#86a878" opacity="0.92"/>
<circle cx="858.3" cy="825.5" r="1.5" fill="#7aa560" opacity="0.92"/>
<circle cx="856.2" cy="838.9" r="1.4" fill="#64905a" opacity="0.92"/>
<circle cx="862" cy="836.6" r="1.4" fill="#7aa560" opacity="0.92"/>
<circle cx="858.4" cy="805.8" r="1" fill="#6d9a55" opacity="0.92"/>
<circle cx="850.3" cy="773.3" r="1" fill="#5f8a4c" opacity="0.92"/>
<circle cx="853.4" cy="780" r="1" fill="#7aa560" opacity="0.92"/>
<circle cx="853.8" cy="817.5" r="1.7" fill="#6d9a55" opacity="0.92"/>
<circle cx="858.7" cy="808.7" r="1" fill="#6d9a55" opacity="0.92"/>
<circle cx="860.9" cy="847.4" r="1.3" fill="#6d9a55" opacity="0.92"/>
<circle cx="855.7" cy="808.3" r="1.1" fill="#64905a" opacity="0.92"/>
<circle cx="853.2" cy="767.7" r="1.6" fill="#86a878" opacity="0.92"/>
<circle cx="845.2" cy="753.3" r="1.5" fill="#86a878" opacity="0.92"/>
<circle cx="855.4" cy="786.7" r="0.9" fill="#5f8a4c" opacity="0.92"/>
<circle cx="854.5" cy="778.1" r="1.4" fill="#86a878" opacity="0.92"/>
<circle cx="851.1" cy="784.2" r="1.6" fill="#6d9a55" opacity="0.92"/>
<circle cx="857.3" cy="804" r="1.2" fill="#64905a" opacity="0.92"/>
<circle cx="853.8" cy="802.1" r="1" fill="#6d9a55" opacity="0.92"/>
<circle cx="855" cy="771.9" r="1.4" fill="#6d9a55" opacity="0.92"/>
<circle cx="860.5" cy="828.4" r="1.4" fill="#7aa560" opacity="0.92"/>
<circle cx="853.6" cy="764.3" r="1.6" fill="#5f8a4c" opacity="0.92"/>
<circle cx="852.7" cy="804.5" r="1.8" fill="#64905a" opacity="0.92"/>
<circle cx="854.3" cy="806.6" r="1.8" fill="#7aa560" opacity="0.92"/>
<circle cx="856.3" cy="844.3" r="1.4" fill="#64905a" opacity="0.92"/>
<circle cx="854" cy="820" r="1.1" fill="#7aa560" opacity="0.92"/>
<circle cx="854.9" cy="815.5" r="1" fill="#86a878" opacity="0.92"/>
<circle cx="853.3" cy="796.1" r="1.6" fill="#7aa560" opacity="0.92"/>
<circle cx="852.2" cy="782.1" r="1.2" fill="#64905a" opacity="0.92"/>
<circle cx="859.2" cy="817.9" r="1.3" fill="#86a878" opacity="0.92"/>
<circle cx="859.2" cy="830.8" r="1.7" fill="#7aa560" opacity="0.92"/>
<circle cx="858.1" cy="844" r="0.9" fill="#64905a" opacity="0.92"/>
<circle cx="850.5" cy="767.9" r="1" fill="#5f8a4c" opacity="0.92"/>
<circle cx="844.8" cy="749.4" r="0.9" fill="#7aa560" opacity="0.92"/>
<circle cx="855.6" cy="813.4" r="1.3" fill="#557c45" opacity="0.92"/>
<circle cx="859.4" cy="836.8" r="1.3" fill="#7aa560" opacity="0.92"/>
<circle cx="852.9" cy="793.1" r="1.6" fill="#5f8a4c" opacity="0.92"/>
<circle cx="853.5" cy="784.2" r="1.8" fill="#6d9a55" opacity="0.92"/>
<circle cx="853.1" cy="802.3" r="1.7" fill="#557c45" opacity="0.92"/>
<circle cx="853.5" cy="814.5" r="1.8" fill="#557c45" opacity="0.92"/>
<circle cx="857.9" cy="840.3" r="1.8" fill="#86a878" opacity="0.92"/>
<circle cx="845.6" cy="748.2" r="1.7" fill="#6d9a55" opacity="0.92"/>
<circle cx="850.8" cy="758" r="1.2" fill="#86a878" opacity="0.92"/>
<circle cx="856.6" cy="770.5" r="0.9" fill="#86a878" opacity="0.92"/>
<circle cx="844.7" cy="748.5" r="1" fill="#7aa560" opacity="0.92"/>
<circle cx="860.2" cy="839" r="1.6" fill="#6d9a55" opacity="0.92"/>
<circle cx="853.6" cy="793.7" r="1.6" fill="#86a878" opacity="0.92"/>
<circle cx="857.2" cy="793.7" r="1.1" fill="#6d9a55" opacity="0.92"/>
<circle cx="860" cy="841.9" r="1.3" fill="#557c45" opacity="0.92"/>
<circle cx="843.2" cy="746.6" r="1.7" fill="#7aa560" opacity="0.92"/>
<circle cx="848.4" cy="763.3" r="1.7" fill="#64905a" opacity="0.92"/>
<circle cx="859.1" cy="803.7" r="1.6" fill="#6d9a55" opacity="0.92"/>
<circle cx="858.6" cy="837.7" r="1.8" fill="#5f8a4c" opacity="0.92"/>
<circle cx="858" cy="815.6" r="1.4" fill="#5f8a4c" opacity="0.92"/>
<circle cx="848.7" cy="750.9" r="1.3" fill="#86a878" opacity="0.92"/>
<circle cx="844.5" cy="751.2" r="1.9" fill="#6d9a55" opacity="0.92"/>
<circle cx="858" cy="817" r="1.1" fill="#6d9a55" opacity="0.92"/>
<circle cx="847.2" cy="754.6" r="1" fill="#64905a" opacity="0.92"/>
<circle cx="856.9" cy="846.5" r="1" fill="#86a878" opacity="0.92"/>
<circle cx="849.3" cy="767.9" r="1.4" fill="#7aa560" opacity="0.92"/>
<circle cx="856.7" cy="789.2" r="1.4" fill="#6d9a55" opacity="0.92"/>
<circle cx="860.2" cy="820" r="1.2" fill="#7aa560" opacity="0.92"/>
<circle cx="862.2" cy="836.9" r="1.5" fill="#6d9a55" opacity="0.92"/>
<circle cx="850.8" cy="777.8" r="1.7" fill="#7aa560" opacity="0.92"/>
<circle cx="851.1" cy="777.9" r="1" fill="#6d9a55" opacity="0.92"/>
<circle cx="859.2" cy="817.1" r="1.9" fill="#86a878" opacity="0.92"/>
<circle cx="849.9" cy="771" r="1.6" fill="#5f8a4c" opacity="0.92"/>
<circle cx="859.2" cy="817.8" r="1.8" fill="#5f8a4c" opacity="0.92"/>
<circle cx="849.4" cy="753.3" r="1.3" fill="#64905a" opacity="0.92"/>
<circle cx="844.1" cy="746" r="1.8" fill="#6d9a55" opacity="0.92"/>
<circle cx="855.6" cy="804.6" r="1.7" fill="#86a878" opacity="0.92"/>
<circle cx="854.2" cy="825.7" r="0.9" fill="#7aa560" opacity="0.92"/>
<circle cx="855.6" cy="773.3" r="1.3" fill="#6d9a55" opacity="0.92"/>
<circle cx="852.4" cy="778.8" r="1" fill="#7aa560" opacity="0.92"/>
<circle cx="855.3" cy="814.9" r="1" fill="#86a878" opacity="0.92"/>
<circle cx="852.5" cy="802.8" r="1" fill="#6d9a55" opacity="0.92"/>
<circle cx="857.6" cy="830.3" r="1.2" fill="#64905a" opacity="0.92"/>
<circle cx="845.8" cy="747.7" r="1" fill="#6d9a55" opacity="0.92"/>
<circle cx="850.4" cy="779.7" r="1.5" fill="#6d9a55" opacity="0.92"/>
<circle cx="854.3" cy="820.1" r="1.4" fill="#6d9a55" opacity="0.92"/>
<circle cx="853.9" cy="810.3" r="1.7" fill="#7aa560" opacity="0.92"/>
<circle cx="855.1" cy="827.1" r="1.2" fill="#6d9a55" opacity="0.92"/>
<circle cx="854.7" cy="793" r="1.3" fill="#86a878" opacity="0.92"/>
<circle cx="859.2" cy="841.5" r="1.9" fill="#64905a" opacity="0.92"/>
<circle cx="843.4" cy="746.2" r="1.8" fill="#86a878" opacity="0.92"/>
<circle cx="849.7" cy="751.3" r="0.9" fill="#64905a" opacity="0.92"/>
<circle cx="854.5" cy="770.1" r="1.3" fill="#7aa560" opacity="0.92"/>
<circle cx="851.2" cy="768" r="1.1" fill="#64905a" opacity="0.92"/>
<circle cx="857.5" cy="798.6" r="1.7" fill="#557c45" opacity="0.92"/>
<circle cx="852.3" cy="781.9" r="1.9" fill="#5f8a4c" opacity="0.92"/>
<circle cx="855.7" cy="809.1" r="1" fill="#6d9a55" opacity="0.92"/>
<circle cx="852.1" cy="796" r="1.1" fill="#5f8a4c" opacity="0.92"/>
<circle cx="855.9" cy="822.9" r="1.8" fill="#557c45" opacity="0.92"/>
<circle cx="855.1" cy="794.7" r="1.4" fill="#5f8a4c" opacity="0.92"/>
<circle cx="857" cy="827.6" r="0.9" fill="#64905a" opacity="0.92"/>
<circle cx="857.2" cy="807.7" r="1.7" fill="#5f8a4c" opacity="0.92"/>
<circle cx="850.4" cy="778.4" r="1.2" fill="#7aa560" opacity="0.92"/>
<circle cx="855.8" cy="797.1" r="1.6" fill="#7aa560" opacity="0.92"/>
<circle cx="861.6" cy="846.2" r="1.8" fill="#86a878" opacity="0.92"/>
<circle cx="852.8" cy="802.9" r="1" fill="#7aa560" opacity="0.92"/>
<circle cx="854.9" cy="783" r="1.6" fill="#64905a" opacity="0.92"/>
<circle cx="851.2" cy="767.1" r="0.9" fill="#557c45" opacity="0.92"/>
<circle cx="859" cy="808.3" r="1.8" fill="#7aa560" opacity="0.92"/>
<circle cx="856.8" cy="777.3" r="1.2" fill="#86a878" opacity="0.92"/>
</g>
<path d="M885.6 761.4 L857.6 763.6 L866 850" stroke="#767676" stroke-width="1.8" fill="none"/>
<g clip-path="url(#gclip)">
<path d="M813 760 L845 757 M816 790 L848 786 M813 760 L816 790" stroke="#999" stroke-width="0.4" stroke-dasharray="1.5 1" fill="none"/>
<path d="M818 822 C 826 824 832 832 834 842 M858 818 C 850 822 845 830 843 840" stroke="#8a5a3a" stroke-width="0.5" fill="none"/>
</g>
<circle cx="710.6" cy="713.3" r="13.2" fill="#2c5628"/>
<circle cx="728.2" cy="726.5" r="10.8" fill="#2c5628"/>
<circle cx="739.9" cy="728.6" r="10" fill="#2c5628"/>
<circle cx="751.8" cy="733" r="8.1" fill="#2c5628"/>
<circle cx="711.6" cy="734.4" r="12.6" fill="#2c5628"/>
<circle cx="720" cy="722" r="10" fill="#2c5628"/>
<g clip-path="url(#gclip)">
<polygon points="710,729.6 721.5,729.6 722.8,806.5 711.3,807.8" fill="#4e883f"/>
<rect x="722.8" y="741.8" width="19" height="52" fill="#c9b27c"/>
<rect x="726" y="745.5" width="15.8" height="45" fill="#8a6a2c"/>
<rect x="729" y="749" width="12.8" height="38.5" fill="#e9dfc6"/>
<rect x="731.5" y="752" width="10.3" height="33" fill="#b89a60"/>
<rect x="733.5" y="754" width="8.3" height="29" fill="#ece6d2"/>
<rect x="734.2" y="753.2" width="32.5" height="31.8" fill="#4c9a4c" rx="3"/>
<path d="M734.2 769 L750 753.2 M750 785 L766.7 769 M740 753.2 L766.7 780 M734.2 760 L760 785" stroke="#3b8240" stroke-width="2" opacity="0.7"/>
<path d="M750.4 753.2 l2.5 6 l-2.5 5 l-2.5 -5 Z M750.4 785 l2.5 -6 l-2.5 -5 l-2.5 5 Z M734.2 769 l6 -2.5 l5 2.5 l-5 2.5 Z M766.7 769 l-6 -2.5 l-5 2.5 l5 2.5 Z" fill="#ebe6d2" opacity="0.8"/>
<rect x="741.8" y="786.2" width="74.9" height="60" fill="#e3d4b6"/>
<path d="M766 786.2 V846 M791 786.2 V846 M741.8 811 H816.7" stroke="#d2c2a2" stroke-width="0.4"/>
<path d="M741.8 795 H769.5 V800 H746.8 V826.5 H741.8 Z" fill="#2e5a2a"/>
<path d="M792.5 795 H816.7 V826.5 H811.7 V800 H792.5 Z" fill="#2e5a2a"/>
<rect x="746.8" y="812.5" width="11.5" height="13" fill="#b7d6a2"/><rect x="800.2" y="812.5" width="11.5" height="13" fill="#b7d6a2"/>
<rect x="759" y="802.5" width="7" height="21" fill="#fbfbfb" stroke="#888" stroke-width="0.4"/><rect x="792.5" y="802.5" width="6.6" height="21" fill="#fbfbfb" stroke="#888" stroke-width="0.4"/>
<rect x="775.3" y="806.5" width="7.2" height="14" fill="#fbfbfb" stroke="#888" stroke-width="0.4"/>
<circle cx="762.1" cy="789.5" r="3.1" fill="#6d9c4c"/><circle cx="795.6" cy="789.5" r="3.1" fill="#6d9c4c"/>
<circle cx="750.7" cy="804" r="8" fill="#86b368"/><circle cx="750.7" cy="804" r="4.5" fill="#6a9a50" filter="url(#b05)"/>
<circle cx="807.8" cy="804" r="8" fill="#86b368"/><circle cx="807.8" cy="804" r="4.5" fill="#6a9a50" filter="url(#b05)"/>
<circle cx="727.8" cy="815.4" r="12.6" fill="#8cb86e"/><circle cx="727.8" cy="815.4" r="7" fill="#6f9f55" filter="url(#b1)"/>
</g>
<g fill="#4a5a2c" opacity="0.62"><circle cx="710.3" cy="283" r="4.8"/><circle cx="708.8" cy="289.6" r="4.3"/><circle cx="706.3" cy="297" r="3.8"/><circle cx="703.7" cy="300.4" r="4.3"/><circle cx="695.3" cy="303.4" r="4.3"/><circle cx="689.8" cy="305.4" r="5.1"/><circle cx="683.2" cy="304.6" r="3.7"/><circle cx="677.8" cy="305.2" r="4.2"/><circle cx="674" cy="301.3" r="3.7"/><circle cx="669.7" cy="296.9" r="4.4"/><circle cx="667.4" cy="291.1" r="4"/><circle cx="666.1" cy="284.4" r="3.6"/><circle cx="666.7" cy="276.9" r="4.6"/><circle cx="667.4" cy="272.8" r="4.9"/><circle cx="672.5" cy="268.9" r="4.7"/><circle cx="678.6" cy="263" r="4.3"/><circle cx="685.5" cy="262" r="4.1"/><circle cx="691.1" cy="261.7" r="4.9"/><circle cx="696.7" cy="264.2" r="3.7"/><circle cx="701.6" cy="266.5" r="4.3"/><circle cx="705.4" cy="271.4" r="4.7"/><circle cx="708.4" cy="278.8" r="4.3"/><circle cx="687.5" cy="284.3" r="22.7"/></g><ellipse cx="699.9" cy="308" rx="1.2" ry="0.9" fill="#5a6a34" opacity="0.8"/><ellipse cx="699.6" cy="305.7" rx="0.9" ry="1" fill="#5a6a34" opacity="0.8"/><ellipse cx="676.6" cy="309.7" rx="1.1" ry="0.8" fill="#5a6a34" opacity="0.8"/><ellipse cx="700.4" cy="308.3" rx="1.4" ry="0.9" fill="#5a6a34" opacity="0.8"/><ellipse cx="682.7" cy="310" rx="1.2" ry="1.1" fill="#5a6a34" opacity="0.8"/><g fill="#9ec47f" opacity="0.93"><circle cx="708.4" cy="281.1" r="4.8"/><circle cx="706.9" cy="287.7" r="4.3"/><circle cx="704.4" cy="295.1" r="3.8"/><circle cx="701.8" cy="298.5" r="4.3"/><circle cx="693.4" cy="301.5" r="4.3"/><circle cx="687.9" cy="303.5" r="5.1"/><circle cx="681.3" cy="302.7" r="3.7"/><circle cx="675.9" cy="303.3" r="4.2"/><circle cx="672.1" cy="299.4" r="3.7"/><circle cx="667.8" cy="295" r="4.4"/><circle cx="665.5" cy="289.2" r="4"/><circle cx="664.2" cy="282.5" r="3.6"/><circle cx="664.8" cy="275" r="4.6"/><circle cx="665.5" cy="270.9" r="4.9"/><circle cx="670.6" cy="267" r="4.7"/><circle cx="676.7" cy="261.1" r="4.3"/><circle cx="683.6" cy="260.1" r="4.1"/><circle cx="689.2" cy="259.8" r="4.9"/><circle cx="694.8" cy="262.3" r="3.7"/><circle cx="699.7" cy="264.6" r="4.3"/><circle cx="703.5" cy="269.5" r="4.7"/><circle cx="706.5" cy="276.9" r="4.3"/><ellipse cx="670.4" cy="259.2" rx="1.3" ry="1.3"/><ellipse cx="696.1" cy="258.3" rx="1.8" ry="1.5"/><ellipse cx="692" cy="254.5" rx="1.8" ry="1.3"/><ellipse cx="669.4" cy="260" rx="1.1" ry="1.5"/><ellipse cx="670.3" cy="260.2" rx="1.5" ry="1.2"/><ellipse cx="660.5" cy="271.5" rx="1.5" ry="1.3"/><circle cx="685.6" cy="282.4" r="23.2"/></g><circle cx="685.6" cy="282.4" r="23.7" fill="url(#tree)"/><path d="M672 268 l1.6 -1.8" stroke="#c6dcae" stroke-width="0.8" stroke-linecap="round" opacity="0.8"/><path d="M667 278.6 l1.6 -1.8" stroke="#c6dcae" stroke-width="0.8" stroke-linecap="round" opacity="0.8"/><path d="M666.6 275.2 l1.6 -1.8" stroke="#c6dcae" stroke-width="0.8" stroke-linecap="round" opacity="0.8"/>
<g fill="#4a5a2c" opacity="0.62"><circle cx="773.3" cy="265.3" r="4.2"/><circle cx="772.4" cy="269.1" r="5.5"/><circle cx="767.2" cy="277.3" r="5.2"/><circle cx="763.2" cy="282.9" r="4.4"/><circle cx="757.5" cy="285.9" r="5.4"/><circle cx="748.6" cy="289.8" r="5.1"/><circle cx="743.6" cy="287.7" r="4.2"/><circle cx="738.2" cy="286.9" r="4.7"/><circle cx="730" cy="283.6" r="5.1"/><circle cx="726.3" cy="276.4" r="4.2"/><circle cx="724" cy="270.8" r="5.1"/><circle cx="721.3" cy="261.4" r="4.5"/><circle cx="722.4" cy="254.5" r="5.4"/><circle cx="726" cy="248" r="5.5"/><circle cx="729" cy="243.7" r="5.9"/><circle cx="734.9" cy="240.4" r="5.4"/><circle cx="743.2" cy="238.4" r="5"/><circle cx="752.2" cy="238.8" r="5.6"/><circle cx="757.3" cy="239.2" r="5.7"/><circle cx="763.4" cy="244.1" r="5.8"/><circle cx="768.5" cy="250.6" r="4.5"/><circle cx="771.4" cy="255.5" r="4.4"/><circle cx="746.9" cy="263.4" r="26"/></g><ellipse cx="739" cy="292.9" rx="1.4" ry="0.8" fill="#5a6a34" opacity="0.8"/><ellipse cx="735.9" cy="293.6" rx="1.2" ry="0.9" fill="#5a6a34" opacity="0.8"/><ellipse cx="753.5" cy="293.4" rx="1.1" ry="0.8" fill="#5a6a34" opacity="0.8"/><ellipse cx="761.4" cy="291.4" rx="1.3" ry="0.7" fill="#5a6a34" opacity="0.8"/><ellipse cx="743.8" cy="294.9" rx="1.4" ry="0.8" fill="#5a6a34" opacity="0.8"/><g fill="#9ec47f" opacity="0.93"><circle cx="771.4" cy="263.4" r="4.2"/><circle cx="770.5" cy="267.2" r="5.5"/><circle cx="765.3" cy="275.4" r="5.2"/><circle cx="761.3" cy="281" r="4.4"/><circle cx="755.6" cy="284" r="5.4"/><circle cx="746.7" cy="287.9" r="5.1"/><circle cx="741.7" cy="285.8" r="4.2"/><circle cx="736.3" cy="285" r="4.7"/><circle cx="728.1" cy="281.7" r="5.1"/><circle cx="724.4" cy="274.5" r="4.2"/><circle cx="722.1" cy="268.9" r="5.1"/><circle cx="719.4" cy="259.5" r="4.5"/><circle cx="720.5" cy="252.6" r="5.4"/><circle cx="724.1" cy="246.1" r="5.5"/><circle cx="727.1" cy="241.8" r="5.9"/><circle cx="733" cy="238.5" r="5.4"/><circle cx="741.3" cy="236.5" r="5"/><circle cx="750.3" cy="236.9" r="5.6"/><circle cx="755.4" cy="237.3" r="5.7"/><circle cx="761.5" cy="242.2" r="5.8"/><circle cx="766.6" cy="248.7" r="4.5"/><circle cx="769.5" cy="253.6" r="4.4"/><ellipse cx="740.6" cy="231.4" rx="1.7" ry="1.1"/><ellipse cx="711.8" cy="259.2" rx="1.1" ry="1.3"/><ellipse cx="749.4" cy="230.7" rx="1.2" ry="1.5"/><ellipse cx="717.7" cy="243.5" rx="1" ry="1.2"/><ellipse cx="712.5" cy="263.9" rx="1.1" ry="1.6"/><ellipse cx="715.6" cy="276" rx="1" ry="1.1"/><circle cx="745" cy="261.5" r="26.6"/></g><circle cx="745" cy="261.5" r="27.2" fill="url(#tree)"/><path d="M733.9 243.2 l1.6 -1.8" stroke="#c6dcae" stroke-width="0.8" stroke-linecap="round" opacity="0.8"/><path d="M722.8 253 l1.6 -1.8" stroke="#c6dcae" stroke-width="0.8" stroke-linecap="round" opacity="0.8"/><path d="M727.5 250.1 l1.6 -1.8" stroke="#c6dcae" stroke-width="0.8" stroke-linecap="round" opacity="0.8"/>
<g fill="#4a5a2c" opacity="0.62"><circle cx="781.3" cy="372.6" r="4.2"/><circle cx="780.5" cy="380.2" r="3.7"/><circle cx="779.3" cy="384.4" r="4"/><circle cx="775.2" cy="390.5" r="4.4"/><circle cx="767.2" cy="394" r="4.6"/><circle cx="763.5" cy="395.5" r="5"/><circle cx="755.8" cy="396" r="4.7"/><circle cx="751.1" cy="394.8" r="4.6"/><circle cx="745.9" cy="389.7" r="5"/><circle cx="740.1" cy="385.8" r="5"/><circle cx="736.6" cy="379.3" r="4.3"/><circle cx="737.2" cy="372.4" r="5.1"/><circle cx="739.3" cy="366.4" r="3.9"/><circle cx="738.9" cy="361.8" r="4.3"/><circle cx="745.3" cy="356.9" r="4.4"/><circle cx="749.7" cy="353.9" r="4.6"/><circle cx="756.1" cy="350.5" r="4.7"/><circle cx="763.9" cy="351" r="5.2"/><circle cx="768.4" cy="354.4" r="5"/><circle cx="775.5" cy="357.2" r="4.5"/><circle cx="777.4" cy="362.6" r="4.9"/><circle cx="779.8" cy="367.7" r="3.7"/><circle cx="759.1" cy="373.5" r="22.9"/></g><ellipse cx="754.4" cy="401.6" rx="1" ry="1" fill="#5a6a34" opacity="0.8"/><ellipse cx="774.6" cy="393.2" rx="1.1" ry="1" fill="#5a6a34" opacity="0.8"/><ellipse cx="753.7" cy="398.8" rx="1.3" ry="0.7" fill="#5a6a34" opacity="0.8"/><ellipse cx="761.2" cy="399.6" rx="1.4" ry="1.1" fill="#5a6a34" opacity="0.8"/><ellipse cx="772" cy="397.9" rx="1.1" ry="0.7" fill="#5a6a34" opacity="0.8"/><g fill="#9ec47f" opacity="0.93"><circle cx="779.4" cy="370.7" r="4.2"/><circle cx="778.6" cy="378.3" r="3.7"/><circle cx="777.4" cy="382.5" r="4"/><circle cx="773.3" cy="388.6" r="4.4"/><circle cx="765.3" cy="392.1" r="4.6"/><circle cx="761.6" cy="393.6" r="5"/><circle cx="753.9" cy="394.1" r="4.7"/><circle cx="749.2" cy="392.9" r="4.6"/><circle cx="744" cy="387.8" r="5"/><circle cx="738.2" cy="383.9" r="5"/><circle cx="734.7" cy="377.4" r="4.3"/><circle cx="735.3" cy="370.5" r="5.1"/><circle cx="737.4" cy="364.5" r="3.9"/><circle cx="737" cy="359.9" r="4.3"/><circle cx="743.4" cy="355" r="4.4"/><circle cx="747.8" cy="352" r="4.6"/><circle cx="754.2" cy="348.6" r="4.7"/><circle cx="762" cy="349.1" r="5.2"/><circle cx="766.5" cy="352.5" r="5"/><circle cx="773.6" cy="355.3" r="4.5"/><circle cx="775.5" cy="360.7" r="4.9"/><circle cx="777.9" cy="365.8" r="3.7"/><ellipse cx="743.9" cy="348.6" rx="1.2" ry="1.2"/><ellipse cx="744.3" cy="347.8" rx="1" ry="1.5"/><ellipse cx="729" cy="362.9" rx="1.9" ry="1.2"/><ellipse cx="735.3" cy="353.9" rx="1.6" ry="1.3"/><ellipse cx="740.4" cy="348.6" rx="1.9" ry="1.3"/><ellipse cx="733.5" cy="355.2" rx="1.2" ry="1.1"/><circle cx="757.2" cy="371.6" r="23.4"/></g><circle cx="757.2" cy="371.6" r="23.9" fill="url(#tree)"/><path d="M749.8 352.8 l1.6 -1.8" stroke="#c6dcae" stroke-width="0.8" stroke-linecap="round" opacity="0.8"/><path d="M743.8 359.2 l1.6 -1.8" stroke="#c6dcae" stroke-width="0.8" stroke-linecap="round" opacity="0.8"/><path d="M740.4 359.9 l1.6 -1.8" stroke="#c6dcae" stroke-width="0.8" stroke-linecap="round" opacity="0.8"/>
<g fill="#4a5a2c" opacity="0.62"><circle cx="712.9" cy="532.6" r="4.2"/><circle cx="712.3" cy="538.2" r="4.2"/><circle cx="710.3" cy="546.9" r="4.8"/><circle cx="707.2" cy="549.4" r="4"/><circle cx="701.8" cy="551.9" r="3.9"/><circle cx="693.9" cy="556" r="4.8"/><circle cx="688.2" cy="554.1" r="4.1"/><circle cx="682.5" cy="553.6" r="4.9"/><circle cx="677.7" cy="548.3" r="4.5"/><circle cx="673.6" cy="544.8" r="3.9"/><circle cx="672.4" cy="539.4" r="5"/><circle cx="670.4" cy="532.2" r="4"/><circle cx="671.6" cy="526" r="4.9"/><circle cx="674.6" cy="520.7" r="4.2"/><circle cx="678.3" cy="517" r="3.8"/><circle cx="682.2" cy="513.3" r="3.7"/><circle cx="687.5" cy="511.9" r="4"/><circle cx="695.4" cy="512.1" r="4.1"/><circle cx="702.4" cy="515.2" r="4.2"/><circle cx="705.9" cy="516.1" r="4"/><circle cx="710.8" cy="521" r="4.1"/><circle cx="714.1" cy="527.3" r="3.7"/><circle cx="692.2" cy="533.5" r="22.5"/></g><ellipse cx="716.7" cy="539.3" rx="1.4" ry="0.9" fill="#5a6a34" opacity="0.8"/><ellipse cx="713.4" cy="547" rx="1" ry="0.9" fill="#5a6a34" opacity="0.8"/><ellipse cx="718.3" cy="538.7" rx="1.4" ry="1.1" fill="#5a6a34" opacity="0.8"/><ellipse cx="693.7" cy="561" rx="0.9" ry="0.8" fill="#5a6a34" opacity="0.8"/><ellipse cx="682" cy="559.5" rx="1.1" ry="1.1" fill="#5a6a34" opacity="0.8"/><g fill="#9ec47f" opacity="0.93"><circle cx="711" cy="530.7" r="4.2"/><circle cx="710.4" cy="536.3" r="4.2"/><circle cx="708.4" cy="545" r="4.8"/><circle cx="705.3" cy="547.5" r="4"/><circle cx="699.9" cy="550" r="3.9"/><circle cx="692" cy="554.1" r="4.8"/><circle cx="686.3" cy="552.2" r="4.1"/><circle cx="680.6" cy="551.7" r="4.9"/><circle cx="675.8" cy="546.4" r="4.5"/><circle cx="671.7" cy="542.9" r="3.9"/><circle cx="670.5" cy="537.5" r="5"/><circle cx="668.5" cy="530.3" r="4"/><circle cx="669.7" cy="524.1" r="4.9"/><circle cx="672.7" cy="518.8" r="4.2"/><circle cx="676.4" cy="515.1" r="3.8"/><circle cx="680.3" cy="511.4" r="3.7"/><circle cx="685.6" cy="510" r="4"/><circle cx="693.5" cy="510.2" r="4.1"/><circle cx="700.5" cy="513.3" r="4.2"/><circle cx="704" cy="514.2" r="4"/><circle cx="708.9" cy="519.1" r="4.1"/><circle cx="712.2" cy="525.4" r="3.7"/><ellipse cx="677.3" cy="506.1" rx="1.3" ry="1"/><ellipse cx="669" cy="515.8" rx="1.4" ry="1.6"/><ellipse cx="665.7" cy="522.8" rx="1" ry="1"/><ellipse cx="689.1" cy="504.4" rx="1.3" ry="1"/><ellipse cx="702.9" cy="507.2" rx="1.2" ry="0.9"/><ellipse cx="665.6" cy="541.5" rx="1.7" ry="1"/><circle cx="690.3" cy="531.6" r="23"/></g><circle cx="690.3" cy="531.6" r="23.6" fill="url(#tree2)"/><path d="M671 527.3 l1.6 -1.8" stroke="#c6dcae" stroke-width="0.8" stroke-linecap="round" opacity="0.8"/><path d="M670.6 522.4 l1.6 -1.8" stroke="#c6dcae" stroke-width="0.8" stroke-linecap="round" opacity="0.8"/><path d="M671.3 525.7 l1.6 -1.8" stroke="#c6dcae" stroke-width="0.8" stroke-linecap="round" opacity="0.8"/>
<filter id="cedf" x="-30%" y="-30%" width="160%" height="160%" color-interpolation-filters="sRGB"><feTurbulence type="fractalNoise" baseFrequency="0.6" numOctaves="2" seed="8" result="n"/><feDisplacementMap in="SourceGraphic" in2="n" scale="7" xChannelSelector="R" yChannelSelector="G" result="d"/><feColorMatrix in="n" type="matrix" values="0.7 0 0 0 0.0  0.66 0 0 0 0.01  0.42 0 0 0 0.0  0 0 0 0 1" result="c"/><feComposite in="c" in2="d" operator="in"/></filter>
<g>
<polygon points="812.7,512.5 808,516.4 813.8,522.6 804.9,523.4 806.7,529.9 800.5,529.8 798.6,534.2 793.5,533.2 790.8,539.9 786,536.3 781.7,536.7 778.9,532.1 773.7,533.8 770.7,530.8 764.4,530.6 769.3,522.1 757.9,522.7 761.6,516.8 758.1,512.5 763.7,508.6 762.6,504 769.5,503 765.2,495 773.6,497.7 773.4,490.7 779,493.3 781.8,488.7 786,490.7 790.6,486.3 794.2,489.9 799.6,489 800.7,495 806.7,495.1 805.9,501 811.1,503.4 806.4,508.9" fill="#555" filter="url(#cedf)" opacity="0.93"/>
<circle cx="813.7" cy="512.4" r="0.8" fill="#4c4c2a" opacity="0.7"/>
<circle cx="788.4" cy="532.8" r="0.7" fill="#4c4c2a" opacity="0.6"/>
<circle cx="801.5" cy="525.5" r="0.9" fill="#4c4c2a" opacity="0.9"/>
<circle cx="805.1" cy="512.9" r="0.6" fill="#4c4c2a" opacity="0.9"/>
<circle cx="771.6" cy="523.5" r="0.8" fill="#5c5a32" opacity="0.7"/>
<circle cx="803.4" cy="523.6" r="0.8" fill="#3f4226" opacity="0.6"/>
<circle cx="786.2" cy="530.9" r="0.6" fill="#4c4c2a" opacity="0.8"/>
<circle cx="777.9" cy="495.4" r="0.5" fill="#77703f" opacity="0.9"/>
<circle cx="802.2" cy="530.5" r="0.6" fill="#4c4c2a" opacity="0.9"/>
<circle cx="812.3" cy="512.9" r="0.6" fill="#77703f" opacity="0.9"/>
<circle cx="791" cy="533.5" r="0.7" fill="#77703f" opacity="0.6"/>
<circle cx="805.1" cy="511.5" r="0.4" fill="#6a6638" opacity="0.8"/>
<circle cx="796.1" cy="494.2" r="0.4" fill="#4c4c2a" opacity="0.8"/>
<circle cx="786.8" cy="536.4" r="0.7" fill="#6a6638" opacity="0.6"/>
<circle cx="763.5" cy="499.2" r="0.8" fill="#5c5a32" opacity="0.7"/>
<circle cx="801.1" cy="535" r="0.5" fill="#77703f" opacity="0.7"/>
<circle cx="784" cy="485.5" r="0.7" fill="#5c5a32" opacity="0.7"/>
<circle cx="768" cy="514.8" r="0.5" fill="#4c4c2a" opacity="0.6"/>
<circle cx="804.9" cy="508.2" r="0.5" fill="#3f4226" opacity="0.9"/>
<circle cx="769.2" cy="501.3" r="0.9" fill="#5c5a32" opacity="0.9"/>
<circle cx="801.4" cy="528.7" r="0.7" fill="#77703f" opacity="0.7"/>
<circle cx="802.5" cy="503.3" r="0.4" fill="#4c4c2a" opacity="0.7"/>
<circle cx="785.9" cy="530.3" r="0.6" fill="#6a6638" opacity="0.8"/>
<circle cx="800" cy="528.2" r="0.9" fill="#3f4226" opacity="0.8"/>
<circle cx="777.3" cy="491" r="0.7" fill="#5c5a32" opacity="0.9"/>
<circle cx="765.1" cy="516.1" r="0.9" fill="#6a6638" opacity="0.6"/>
<circle cx="771.2" cy="496" r="0.6" fill="#6a6638" opacity="0.9"/>
<circle cx="806.3" cy="523.3" r="0.9" fill="#4c4c2a" opacity="0.9"/>
<circle cx="778.4" cy="488.2" r="0.6" fill="#6a6638" opacity="0.8"/>
<circle cx="807.4" cy="497.3" r="0.9" fill="#3f4226" opacity="0.6"/>
<circle cx="768.6" cy="512.8" r="0.6" fill="#3f4226" opacity="0.6"/>
<circle cx="802" cy="520.7" r="0.9" fill="#4c4c2a" opacity="0.9"/>
<circle cx="782.9" cy="491.7" r="0.6" fill="#77703f" opacity="0.8"/>
<circle cx="763.9" cy="507" r="0.4" fill="#77703f" opacity="0.8"/>
<circle cx="766.4" cy="515.1" r="0.6" fill="#4c4c2a" opacity="0.8"/>
<circle cx="803.2" cy="503.3" r="0.6" fill="#4c4c2a" opacity="0.7"/>
<circle cx="768.5" cy="498.1" r="0.7" fill="#6a6638" opacity="0.8"/>
<circle cx="801.8" cy="499.8" r="0.5" fill="#6a6638" opacity="0.8"/>
<circle cx="795.1" cy="487.4" r="0.6" fill="#5c5a32" opacity="0.8"/>
<circle cx="778.3" cy="529.7" r="0.6" fill="#3f4226" opacity="0.9"/>
<circle cx="802.9" cy="517.3" r="0.8" fill="#6a6638" opacity="0.6"/>
<circle cx="759.1" cy="517.7" r="0.6" fill="#3f4226" opacity="0.8"/>
<circle cx="774.1" cy="490.8" r="0.6" fill="#77703f" opacity="0.6"/>
<circle cx="811.9" cy="518" r="0.7" fill="#4c4c2a" opacity="0.7"/>
<circle cx="771.1" cy="531.9" r="0.4" fill="#77703f" opacity="0.6"/>
<circle cx="769.2" cy="517.6" r="0.5" fill="#6a6638" opacity="0.6"/>
<circle cx="808.7" cy="519.8" r="0.5" fill="#3f4226" opacity="0.8"/>
<circle cx="772.4" cy="496.6" r="0.7" fill="#4c4c2a" opacity="0.7"/>
<circle cx="767.1" cy="515.8" r="0.8" fill="#4c4c2a" opacity="0.8"/>
<circle cx="804.8" cy="517.2" r="0.7" fill="#6a6638" opacity="0.9"/>
<circle cx="757.8" cy="512.7" r="0.6" fill="#5c5a32" opacity="0.9"/>
<circle cx="800.7" cy="502.8" r="0.5" fill="#3f4226" opacity="0.8"/>
<circle cx="766.8" cy="493.6" r="0.7" fill="#3f4226" opacity="0.8"/>
<circle cx="759.8" cy="512.4" r="0.6" fill="#6a6638" opacity="0.8"/>
<circle cx="792.8" cy="536.7" r="0.5" fill="#4c4c2a" opacity="0.9"/>
<circle cx="813.3" cy="509.4" r="0.9" fill="#77703f" opacity="0.9"/>
<circle cx="783.9" cy="537.6" r="0.6" fill="#4c4c2a" opacity="0.6"/>
<circle cx="764.3" cy="521.2" r="0.6" fill="#6a6638" opacity="0.6"/>
<circle cx="792.2" cy="496.3" r="0.5" fill="#4c4c2a" opacity="0.7"/>
<circle cx="790.2" cy="494.8" r="0.9" fill="#5c5a32" opacity="0.9"/>
<circle cx="761.5" cy="510" r="0.9" fill="#3f4226" opacity="0.8"/>
<circle cx="802.8" cy="507.2" r="0.6" fill="#5c5a32" opacity="0.8"/>
<circle cx="797.1" cy="492.6" r="0.7" fill="#5c5a32" opacity="0.9"/>
<circle cx="766.8" cy="505.3" r="0.9" fill="#3f4226" opacity="0.9"/>
<circle cx="770.1" cy="499.9" r="0.9" fill="#5c5a32" opacity="0.8"/>
<circle cx="768.6" cy="504.3" r="0.5" fill="#77703f" opacity="0.6"/>
<circle cx="769.4" cy="528.8" r="0.7" fill="#4c4c2a" opacity="0.7"/>
<circle cx="793.1" cy="490.8" r="0.4" fill="#3f4226" opacity="0.7"/>
<circle cx="805.8" cy="503.5" r="0.5" fill="#3f4226" opacity="0.8"/>
<circle cx="801" cy="528.4" r="0.7" fill="#3f4226" opacity="0.6"/>
</g>
<text x="595.4" y="285.5" font-size="3.9" fill="#161616" stroke="#161616" stroke-width="0.07" font-family="Liberation Sans" letter-spacing="-0.02">Bestaande Es</text>
<path d="M620 284.3 H687" stroke="#383838" stroke-width="0.42" fill="none"/>
<text x="595.4" y="328" font-size="3.9" fill="#161616" stroke="#161616" stroke-width="0.07" font-family="Liberation Sans" letter-spacing="-0.02">Verborgen bankje in de</text>
<text x="595.4" y="332.4" font-size="3.9" fill="#161616" stroke="#161616" stroke-width="0.07" font-family="Liberation Sans" letter-spacing="-0.02">schaduw</text>
<path d="M636 328.7 H680" stroke="#383838" stroke-width="0.42" fill="none"/>
<text x="595.4" y="348.6" font-size="3.9" fill="#161616" stroke="#161616" stroke-width="0.07" font-family="Liberation Sans" letter-spacing="-0.02">Veranda met buitenkeuken.</text>
<text x="595.4" y="353.1" font-size="3.9" fill="#161616" stroke="#161616" stroke-width="0.07" font-family="Liberation Sans" letter-spacing="-0.02">De vloer bestaat uit 90x90 cm</text>
<text x="595.4" y="357.5" font-size="3.9" fill="#161616" stroke="#161616" stroke-width="0.07" font-family="Liberation Sans" letter-spacing="-0.02">tegels van keramiek, of</text>
<text x="595.4" y="362" font-size="3.9" fill="#161616" stroke="#161616" stroke-width="0.07" font-family="Liberation Sans" letter-spacing="-0.02">klinkers in visgraat</text>
<path d="M648 353.6 H702" stroke="#383838" stroke-width="0.42" fill="none"/>
<text x="595.4" y="381.8" font-size="3.9" fill="#161616" stroke="#161616" stroke-width="0.07" font-family="Liberation Sans" letter-spacing="-0.02">Muur van flagstones of steenstrips</text>
<path d="M651 380.8 H668" stroke="#383838" stroke-width="0.42" fill="none"/>
<text x="595.4" y="393.6" font-size="3.9" fill="#161616" stroke="#161616" stroke-width="0.07" font-family="Liberation Sans" letter-spacing="-0.02">Ommuurde tuin met in het</text>
<text x="595.4" y="398.1" font-size="3.9" fill="#161616" stroke="#161616" stroke-width="0.07" font-family="Liberation Sans" letter-spacing="-0.02">middelpunt een waterelement</text>
<path d="M650 395 H700" stroke="#383838" stroke-width="0.42" fill="none"/>
<text x="595.4" y="412.6" font-size="3.9" fill="#161616" stroke="#161616" stroke-width="0.07" font-family="Liberation Sans" letter-spacing="-0.02">Klinkerterrasje in visgraat voor</text>
<text x="595.4" y="417.1" font-size="3.9" fill="#161616" stroke="#161616" stroke-width="0.07" font-family="Liberation Sans" letter-spacing="-0.02">de open haard</text>
<path d="M648 413.3 H690" stroke="#383838" stroke-width="0.42" fill="none"/>
<text x="595.4" y="426" font-size="3.9" fill="#161616" stroke="#161616" stroke-width="0.07" font-family="Liberation Sans" letter-spacing="-0.02">'Wolken' met wintergroene heesters</text>
<text x="595.4" y="430.4" font-size="3.9" fill="#161616" stroke="#161616" stroke-width="0.07" font-family="Liberation Sans" letter-spacing="-0.02">in een grijsgroene kleur met daarin</text>
<text x="595.4" y="434.9" font-size="3.9" fill="#161616" stroke="#161616" stroke-width="0.07" font-family="Liberation Sans" letter-spacing="-0.02">meerstammige boompjes</text>
<path d="M655 429.2 H685" stroke="#383838" stroke-width="0.42" fill="none"/>
<text x="595.4" y="459.2" font-size="3.9" fill="#161616" stroke="#161616" stroke-width="0.07" font-family="Liberation Sans" letter-spacing="-0.02">Border met heesters in groene en grijze</text>
<text x="595.4" y="463.6" font-size="3.9" fill="#161616" stroke="#161616" stroke-width="0.07" font-family="Liberation Sans" letter-spacing="-0.02">bladtinten</text>
<path d="M665 459.5 H676" stroke="#383838" stroke-width="0.42" fill="none"/>
<text x="595.4" y="481.8" font-size="3.9" fill="#161616" stroke="#161616" stroke-width="0.07" font-family="Liberation Sans" letter-spacing="-0.02">Plantenborder met vaste planten en</text>
<text x="595.4" y="486.2" font-size="3.9" fill="#161616" stroke="#161616" stroke-width="0.07" font-family="Liberation Sans" letter-spacing="-0.02">siergrassen</text>
<path d="M657 482.5 H695" stroke="#383838" stroke-width="0.42" fill="none"/>
<text x="595.4" y="534.2" font-size="3.9" fill="#161616" stroke="#161616" stroke-width="0.07" font-family="Liberation Sans" letter-spacing="-0.02">Aan te planten boompje</text>
<path d="M637 533 H690" stroke="#383838" stroke-width="0.42" fill="none"/>
<text x="595.4" y="571.3" font-size="3.9" fill="#161616" stroke="#161616" stroke-width="0.07" font-family="Liberation Sans" letter-spacing="-0.02">Bestaande coniferenpoort</text>
<path d="M640 570.2 H678" stroke="#383838" stroke-width="0.42" fill="none"/>
<text x="595.4" y="648.3" font-size="3.9" fill="#161616" stroke="#161616" stroke-width="0.07" font-family="Liberation Sans" letter-spacing="-0.02">Ronde mostuinvakken in hoogte oplopend,</text>
<text x="595.4" y="652.8" font-size="3.9" fill="#161616" stroke="#161616" stroke-width="0.07" font-family="Liberation Sans" letter-spacing="-0.02">met een omlijsting van Cortenstaal</text>
<path d="M670 649.5 H726" stroke="#383838" stroke-width="0.42" fill="none"/>
<text x="595.4" y="677.5" font-size="3.9" fill="#161616" stroke="#161616" stroke-width="0.07" font-family="Liberation Sans" letter-spacing="-0.02">Border met heesters in groene en grijze</text>
<text x="595.4" y="682" font-size="3.9" fill="#161616" stroke="#161616" stroke-width="0.07" font-family="Liberation Sans" letter-spacing="-0.02">bladtinten</text>
<path d="M663 678 H710" stroke="#383838" stroke-width="0.42" fill="none"/>
<text x="595.4" y="713.3" font-size="3.9" fill="#161616" stroke="#161616" stroke-width="0.07" font-family="Liberation Sans" letter-spacing="-0.02">'Wolken' met wintergroene heesters in een</text>
<text x="595.4" y="717.8" font-size="3.9" fill="#161616" stroke="#161616" stroke-width="0.07" font-family="Liberation Sans" letter-spacing="-0.02">grijsgroene kleur</text>
<path d="M668 714 H710" stroke="#383838" stroke-width="0.42" fill="none"/>
<text x="632" y="766" font-size="3.9" fill="#161616" stroke="#161616" stroke-width="0.07" font-family="Liberation Sans" letter-spacing="-0.02">Schaduwterras met een dakboom, afgezet</text>
<text x="632" y="770.5" font-size="3.9" fill="#161616" stroke="#161616" stroke-width="0.07" font-family="Liberation Sans" letter-spacing="-0.02">met een muur van 150 cm hoog van</text>
<text x="632" y="774.9" font-size="3.9" fill="#161616" stroke="#161616" stroke-width="0.07" font-family="Liberation Sans" letter-spacing="-0.02">flagstones of steenstrips, met een zitbank</text>
<path d="M705 770 H742" stroke="#383838" stroke-width="0.42" fill="none"/>
<text x="632" y="790.3" font-size="3.9" fill="#161616" stroke="#161616" stroke-width="0.07" font-family="Liberation Sans" letter-spacing="-0.02">Wintergroene leibomen, bijv. Steeneik</text>
<path d="M697 789.3 H713" stroke="#383838" stroke-width="0.42" fill="none"/>
<text x="632" y="818.5" font-size="3.9" fill="#161616" stroke="#161616" stroke-width="0.07" font-family="Liberation Sans" letter-spacing="-0.02">Meerstammige boom</text>
<path d="M668 817.5 H728" stroke="#383838" stroke-width="0.42" fill="none"/>
<text x="632" y="831" font-size="3.9" fill="#161616" stroke="#161616" stroke-width="0.07" font-family="Liberation Sans" letter-spacing="-0.02">Terras van 90x90 cm tegels van keramiek</text>
<text x="632" y="835.5" font-size="3.9" fill="#161616" stroke="#161616" stroke-width="0.07" font-family="Liberation Sans" letter-spacing="-0.02">in een zachte tint beige-grijs</text>
<path d="M703 831.5 H770" stroke="#383838" stroke-width="0.42" fill="none"/>
<text x="823.7" y="264.5" font-size="3.9" fill="#161616" stroke="#161616" stroke-width="0.07" font-family="Liberation Sans" letter-spacing="-0.02">Bestaande Els</text>
<path d="M745 263.4 H822.5" stroke="#383838" stroke-width="0.42" fill="none"/>
<text x="823.7" y="316" font-size="3.9" fill="#161616" stroke="#161616" stroke-width="0.07" font-family="Liberation Sans" letter-spacing="-0.02">'Wolken' met wintergroene heesters in een</text>
<text x="823.7" y="320.4" font-size="3.9" fill="#161616" stroke="#161616" stroke-width="0.07" font-family="Liberation Sans" letter-spacing="-0.02">grijsgroene kleur</text>
<path d="M717 316.5 H822.5" stroke="#383838" stroke-width="0.42" fill="none"/>
<text x="823.7" y="376" font-size="3.9" fill="#161616" stroke="#161616" stroke-width="0.07" font-family="Liberation Sans" letter-spacing="-0.02">Bestaande Sierkersen</text>
<path d="M768 374.9 H822.5" stroke="#383838" stroke-width="0.42" fill="none"/>
<text x="823.7" y="399.2" font-size="3.9" fill="#161616" stroke="#161616" stroke-width="0.07" font-family="Liberation Sans" letter-spacing="-0.02">Split of grind in honingraatmatten</text>
<text x="823.7" y="403.6" font-size="3.9" fill="#161616" stroke="#161616" stroke-width="0.07" font-family="Liberation Sans" letter-spacing="-0.02">in een zachte beige tint</text>
<path d="M713 400 H822.5" stroke="#383838" stroke-width="0.42" fill="none"/>
<text x="823.7" y="439.5" font-size="3.9" fill="#161616" stroke="#161616" stroke-width="0.07" font-family="Liberation Sans" letter-spacing="-0.02">Border met heesters in groene en grijze</text>
<text x="823.7" y="443.9" font-size="3.9" fill="#161616" stroke="#161616" stroke-width="0.07" font-family="Liberation Sans" letter-spacing="-0.02">bladtinten</text>
<path d="M803 440.5 H822.5" stroke="#383838" stroke-width="0.42" fill="none"/>
<text x="860.5" y="514" font-size="3.9" fill="#161616" stroke="#161616" stroke-width="0.07" font-family="Liberation Sans" letter-spacing="-0.02">Bestaande Ceder</text>
<path d="M812 512.9 H859.5" stroke="#383838" stroke-width="0.42" fill="none"/>
<text x="860.5" y="563.7" font-size="3.9" fill="#161616" stroke="#161616" stroke-width="0.07" font-family="Liberation Sans" letter-spacing="-0.02">Plantenborder met vaste planten en</text>
<text x="860.5" y="568.2" font-size="3.9" fill="#161616" stroke="#161616" stroke-width="0.07" font-family="Liberation Sans" letter-spacing="-0.02">siergrassen</text>
<path d="M806 564.5 H859.5" stroke="#383838" stroke-width="0.42" fill="none"/>
<text x="860.5" y="634.9" font-size="3.9" fill="#161616" stroke="#161616" stroke-width="0.07" font-family="Liberation Sans" letter-spacing="-0.02">Bestaande kas</text>
<path d="M810 633.8 H859.5" stroke="#383838" stroke-width="0.42" fill="none"/>
<text x="860.5" y="659.5" font-size="3.9" fill="#161616" stroke="#161616" stroke-width="0.07" font-family="Liberation Sans" letter-spacing="-0.02">Praktische ruimte voor o.a. de</text>
<text x="860.5" y="664" font-size="3.9" fill="#161616" stroke="#161616" stroke-width="0.07" font-family="Liberation Sans" letter-spacing="-0.02">containers</text>
<path d="M812 660 H859.5" stroke="#383838" stroke-width="0.42" fill="none"/>
<text x="860.5" y="699.4" font-size="3.9" fill="#161616" stroke="#161616" stroke-width="0.07" font-family="Liberation Sans" letter-spacing="-0.02">Gazon</text>
<path d="M763 698.3 H859.5" stroke="#383838" stroke-width="0.42" fill="none"/>
<text x="860.5" y="736.1" font-size="3.9" fill="#161616" stroke="#161616" stroke-width="0.07" font-family="Liberation Sans" letter-spacing="-0.02">'Wolk' met wintergroene heesters in een</text>
<text x="860.5" y="740.6" font-size="3.9" fill="#161616" stroke="#161616" stroke-width="0.07" font-family="Liberation Sans" letter-spacing="-0.02">grijsgroene kleur en een klein boompje</text>
<path d="M805 737 H859.5" stroke="#383838" stroke-width="0.42" fill="none"/>
<text x="860.5" y="750.4" font-size="3.9" fill="#161616" stroke="#161616" stroke-width="0.07" font-family="Liberation Sans" letter-spacing="-0.02">Tegen de gevel, waar mogelijk, staaldraden</text>
<text x="860.5" y="754.9" font-size="3.9" fill="#161616" stroke="#161616" stroke-width="0.07" font-family="Liberation Sans" letter-spacing="-0.02">of klimrekken met klimrozen en blauwe regen</text>
<path d="M845 751 H859.5" stroke="#383838" stroke-width="0.42" fill="none"/>
<text x="896.7" y="780.4" font-size="3.9" fill="#161616" stroke="#161616" stroke-width="0.07" font-family="Liberation Sans" letter-spacing="-0.02">Ruimte openhouden om met een kar</text>
<text x="896.7" y="784.9" font-size="3.9" fill="#161616" stroke="#161616" stroke-width="0.07" font-family="Liberation Sans" letter-spacing="-0.02">naar achteren te rijden</text>
<path d="M830 781 H895.5" stroke="#383838" stroke-width="0.42" fill="none"/>
<text x="896.7" y="799.7" font-size="3.9" fill="#161616" stroke="#161616" stroke-width="0.07" font-family="Liberation Sans" letter-spacing="-0.02">Wintergroene beplanting, om de muur</text>
<text x="896.7" y="804.2" font-size="3.9" fill="#161616" stroke="#161616" stroke-width="0.07" font-family="Liberation Sans" letter-spacing="-0.02">te 'verstoppen'</text>
<path d="M862 800 H895.5" stroke="#383838" stroke-width="0.42" fill="none"/>
<text x="896.7" y="816.7" font-size="3.9" fill="#161616" stroke="#161616" stroke-width="0.07" font-family="Liberation Sans" letter-spacing="-0.02">Border met bloeiende heesters, een</text>
<text x="896.7" y="821.2" font-size="3.9" fill="#161616" stroke="#161616" stroke-width="0.07" font-family="Liberation Sans" letter-spacing="-0.02">karakteristiek boompje, afgezet met een</text>
<text x="896.7" y="825.6" font-size="3.9" fill="#161616" stroke="#161616" stroke-width="0.07" font-family="Liberation Sans" letter-spacing="-0.02">wintergroene haag van 100 cm hoog</text>
<path d="M832 820 H895.5" stroke="#383838" stroke-width="0.42" fill="none"/>
<filter id="tex" x="0" y="0" width="100%" height="100%"><feTurbulence type="fractalNoise" baseFrequency="0.22" numOctaves="2" seed="5" result="n"/><feColorMatrix in="n" type="matrix" values="0 0 0 0 0  0 0 0 0 0  0 0 0 0 0  1.6 0 0 0 -0.55" result="m"/><feComposite in="m" in2="SourceGraphic" operator="in"/></filter>
<filter id="tex2" x="0" y="0" width="100%" height="100%"><feTurbulence type="fractalNoise" baseFrequency="0.3" numOctaves="2" seed="9" result="n"/><feColorMatrix in="n" type="matrix" values="0 0 0 0 1  0 0 0 0 1  0 0 0 0 0.9  0 1.8 0 0 -0.75" result="m"/><feComposite in="m" in2="SourceGraphic" operator="in"/></filter>
<clipPath id="pc1"><rect x="809" y="116.5" width="63.1" height="64"/></clipPath>
<g clip-path="url(#pc1)">
<rect x="809" y="116.5" width="63.1" height="64" fill="#4d6d2e" /><rect x="809" y="148.5" width="63.1" height="32" fill="#a8936f" /><ellipse cx="853.2" cy="164.5" rx="25.2" ry="14.1" fill="#c0ab86" filter="url(#b2)"/><ellipse cx="827.9" cy="129.3" rx="28.4" ry="16" fill="#3c5a22" filter="url(#b2)"/><ellipse cx="862.6" cy="140.8" rx="12.6" ry="9" fill="#5f8a36" filter="url(#b1)"/><ellipse cx="867.1" cy="124.2" rx="6.3" ry="6.4" fill="#dfe6d6" filter="url(#b1)"/><rect x="822.9" y="129.3" width="3.2" height="32" fill="#5a4228" /><rect x="840.5" y="132.5" width="1.9" height="19.2" fill="#5a4228" /><rect x="816.6" y="134.4" width="1.9" height="22.4" fill="#4a3820" /><rect x="833" y="150.4" width="15.8" height="7.7" fill="#7a5a3a" /><rect x="821.6" y="161.3" width="17" height="12.8" fill="#8a6a48" /><ellipse cx="815.3" cy="174.1" rx="15.8" ry="11.5" fill="#3a5a24" filter="url(#b1)"/><ellipse cx="843.7" cy="179.2" rx="31.6" ry="3.8" fill="#4a6a2a" filter="url(#b1)"/>
<rect x="809" y="116.5" width="63.1" height="64" fill="#10180a" filter="url(#tex)" opacity="0.36"/>
<rect x="809" y="116.5" width="63.1" height="64" fill="#fff" filter="url(#tex2)" opacity="0.2"/>
</g>
<clipPath id="pc2"><rect x="878.4" y="116.5" width="63.1" height="64"/></clipPath>
<g clip-path="url(#pc2)">
<rect x="878.4" y="116.5" width="63.1" height="64" fill="#7a8f63" /><rect x="878.4" y="116.5" width="63.1" height="25.6" fill="#c3c7c9" /><rect x="900.5" y="116.5" width="20.2" height="20.5" fill="#8b8c86" /><rect x="902.4" y="116.5" width="6.3" height="19.2" fill="#6d6e6a" /><rect x="911.2" y="116.5" width="6.3" height="19.2" fill="#74756f" /><ellipse cx="889.8" cy="151.7" rx="18.9" ry="16" fill="#6f9150" filter="url(#b1)"/><ellipse cx="891" cy="145.3" rx="12.6" ry="7.7" fill="#f2f2ee" filter="url(#b1)"/><ellipse cx="932" cy="135.7" rx="9.5" ry="12.8" fill="#5d8744" filter="url(#b1)"/><ellipse cx="932" cy="134.4" rx="3.8" ry="3.8" fill="#f4f4f0" filter="url(#b1)"/><polygon points="904.9,142.1 917.5,142.1 925.7,180.5 900.5,180.5" fill="#bba98d"/><ellipse cx="930.1" cy="162.6" rx="15.8" ry="16" fill="#a2a7ae" filter="url(#b1)"/><ellipse cx="886" cy="174.1" rx="18.9" ry="10.2" fill="#929a96" filter="url(#b1)"/><ellipse cx="903.6" cy="166.4" rx="8.8" ry="7.7" fill="#a9aeb2" filter="url(#b1)"/>
<rect x="878.4" y="116.5" width="63.1" height="64" fill="#10180a" filter="url(#tex)" opacity="0.36"/>
<rect x="878.4" y="116.5" width="63.1" height="64" fill="#fff" filter="url(#tex2)" opacity="0.2"/>
</g>
<clipPath id="pc3"><rect x="946" y="116.5" width="45.7" height="64"/></clipPath>
<g clip-path="url(#pc3)">
<rect x="946" y="116.5" width="45.7" height="64" fill="#6b5d34" /><ellipse cx="962" cy="126.1" rx="13.7" ry="9.6" fill="#e3dcb2" filter="url(#b2)"/><ellipse cx="982.6" cy="135.7" rx="11.4" ry="19.2" fill="#4a4424" filter="url(#b2)"/><ellipse cx="966.6" cy="148.5" rx="16" ry="9.6" fill="#7b7a3c" filter="url(#b1)"/><rect x="946" y="162.6" width="45.7" height="17.9" fill="#b8a684" /><ellipse cx="966.6" cy="163.9" rx="6.4" ry="8.3" fill="#a89878" /><ellipse cx="987.1" cy="170.9" rx="8.2" ry="12.8" fill="#2e3418" filter="url(#b1)"/><ellipse cx="951.5" cy="161.3" rx="6.9" ry="6.4" fill="#8a7a3a" filter="url(#b1)"/><path d="M971.1 119.7 Q989.4 132.5 984.8 164.5" stroke="#3a3018" stroke-width="2.5" fill="none"/>
<rect x="946" y="116.5" width="45.7" height="64" fill="#10180a" filter="url(#tex)" opacity="0.36"/>
<rect x="946" y="116.5" width="45.7" height="64" fill="#fff" filter="url(#tex2)" opacity="0.2"/>
</g>
<clipPath id="pc4"><rect x="996.6" y="116.5" width="45.2" height="64"/></clipPath>
<g clip-path="url(#pc4)">
<rect x="996.6" y="116.5" width="45.2" height="64" fill="#2b2a16" /><ellipse cx="1019.2" cy="137" rx="18.1" ry="10.2" fill="#6a6a2c" filter="url(#b2)"/><ellipse cx="1010.2" cy="151.7" rx="13.6" ry="6.4" fill="#7a6038" filter="url(#b1)"/><ellipse cx="1035" cy="145.3" rx="6.8" ry="6.4" fill="#5d8a30" filter="url(#b1)"/><ellipse cx="1005.6" cy="172.8" rx="13.6" ry="9.6" fill="#4a3a1e" filter="url(#b2)"/><rect x="1019.2" y="149.8" width="2.7" height="19.2" fill="#e6e0d0" /><rect x="1029.1" y="149.8" width="2.7" height="21.8" fill="#e6e0d0" /><rect x="1016.9" y="167.7" width="3.6" height="5.1" fill="#f0d8a0" /><rect x="1035" y="165.1" width="2.7" height="6.4" fill="#f0d8a0" /><ellipse cx="1032.8" cy="124.2" rx="5.4" ry="3.2" fill="#c9b9a0" filter="url(#b1)"/><ellipse cx="1005.6" cy="129.3" rx="4.5" ry="3.8" fill="#a08040" filter="url(#b1)"/>
<rect x="996.6" y="116.5" width="45.2" height="64" fill="#10180a" filter="url(#tex)" opacity="0.36"/>
<rect x="996.6" y="116.5" width="45.2" height="64" fill="#fff" filter="url(#tex2)" opacity="0.2"/>
</g>
<clipPath id="pc5"><rect x="878.4" y="185.6" width="44.8" height="63.4"/></clipPath>
<g clip-path="url(#pc5)">
<rect x="878.4" y="185.6" width="44.8" height="63.4" fill="#6a6236" /><ellipse cx="900.8" cy="191.9" rx="15.7" ry="7.6" fill="#e8e2c4" filter="url(#b2)"/><ellipse cx="887.4" cy="220.5" rx="11.2" ry="12.7" fill="#55682e" filter="url(#b2)"/><ellipse cx="914.2" cy="214.1" rx="9" ry="15.9" fill="#5a5a2c" filter="url(#b2)"/><rect x="906.6" y="214.1" width="5.4" height="22.2" fill="#d9cfb6" /><rect x="891.8" y="224.9" width="4.5" height="11.4" fill="#b8a27c" /><polygon points="898.6,231.2 905.3,231.2 912,249 882.9,249" fill="#cdbb9a"/><ellipse cx="916.5" cy="237.6" rx="9" ry="11.4" fill="#7a7838" filter="url(#b1)"/><path d="M882.9 233.2 Q887.4 198.3 905.3 190.7" stroke="#4a3c20" stroke-width="2" fill="none"/>
<rect x="878.4" y="185.6" width="44.8" height="63.4" fill="#10180a" filter="url(#tex)" opacity="0.36"/>
<rect x="878.4" y="185.6" width="44.8" height="63.4" fill="#fff" filter="url(#tex2)" opacity="0.2"/>
</g>
<clipPath id="pc6"><rect x="928.1" y="185.6" width="45.2" height="63.4"/></clipPath>
<g clip-path="url(#pc6)">
<rect x="928.1" y="185.6" width="45.2" height="63.4" fill="#62a235" /><rect x="928.1" y="185.6" width="45.2" height="11.4" fill="#dfe9f4" /><ellipse cx="941.7" cy="191.9" rx="13.6" ry="5.1" fill="#b9d3ee" filter="url(#b1)"/><ellipse cx="955.2" cy="220.5" rx="22.6" ry="22.2" fill="#74b83c" filter="url(#b2)"/><polygon points="928.1,236.3 950.7,242.7 973.3,247.7 973.3,249 928.1,249" fill="#6a6a62"/><path d="M930.4 242.7 L948.4 201.4" stroke="#4a4a2a" stroke-width="0.9"/><path d="M939.4 242.7 L921.3 201.4" stroke="#4a4a2a" stroke-width="0.7"/><path d="M940.3 242.7 L958.4 201.4" stroke="#4a4a2a" stroke-width="0.9"/><path d="M949.3 242.7 L931.3 201.4" stroke="#4a4a2a" stroke-width="0.7"/><path d="M950.2 242.7 L968.3 201.4" stroke="#4a4a2a" stroke-width="0.9"/><path d="M959.3 242.7 L941.2 201.4" stroke="#4a4a2a" stroke-width="0.7"/><path d="M960.2 242.7 L978.3 201.4" stroke="#4a4a2a" stroke-width="0.9"/><path d="M969.2 242.7 L951.2 201.4" stroke="#4a4a2a" stroke-width="0.7"/><path d="M970.1 242.7 L988.2 201.4" stroke="#4a4a2a" stroke-width="0.9"/><path d="M979.2 242.7 L961.1 201.4" stroke="#4a4a2a" stroke-width="0.7"/>
<rect x="928.1" y="185.6" width="45.2" height="63.4" fill="#10180a" filter="url(#tex)" opacity="0.36"/>
<rect x="928.1" y="185.6" width="45.2" height="63.4" fill="#fff" filter="url(#tex2)" opacity="0.2"/>
</g>
<clipPath id="pc7"><rect x="978.2" y="185.6" width="63.6" height="63.4"/></clipPath>
<g clip-path="url(#pc7)">
<rect x="978.2" y="185.6" width="63.6" height="63.4" fill="#66735a" /><rect x="978.2" y="185.6" width="63.6" height="15.9" fill="#aeb6b8" /><ellipse cx="1013.2" cy="191.9" rx="12.7" ry="6.3" fill="#e9eef4" filter="url(#b1)"/><ellipse cx="985.8" cy="198.3" rx="11.4" ry="15.9" fill="#6a6e64" filter="url(#b1)"/><ellipse cx="1032.3" cy="201.4" rx="12.7" ry="12.7" fill="#5a7a3c" filter="url(#b1)"/><ellipse cx="996" cy="207.8" rx="3.2" ry="19" fill="#2f3e28" /><ellipse cx="1008.1" cy="204.6" rx="2.5" ry="17.8" fill="#34452c" /><ellipse cx="990.9" cy="236.3" rx="17.8" ry="12.7" fill="#8fa27a" filter="url(#b1)"/><ellipse cx="1004.9" cy="228.7" rx="7.6" ry="6.3" fill="#5f9a34" filter="url(#b1)"/><ellipse cx="1019.5" cy="230" rx="8.9" ry="8.9" fill="#8b8b8f" filter="url(#b1)"/><polygon points="1022.7,230 1041.8,224.9 1041.8,249 1006.8,249" fill="#b9a58e"/>
<rect x="978.2" y="185.6" width="63.6" height="63.4" fill="#10180a" filter="url(#tex)" opacity="0.36"/>
<rect x="978.2" y="185.6" width="63.6" height="63.4" fill="#fff" filter="url(#tex2)" opacity="0.2"/>
</g>
<clipPath id="pc8"><rect x="928.1" y="254.2" width="63.6" height="63.3"/></clipPath>
<g clip-path="url(#pc8)">
<rect x="928.1" y="254.2" width="63.6" height="63.3" fill="#bfa684" /><ellipse cx="942.1" cy="268.1" rx="22.3" ry="19" fill="#3f642a" filter="url(#b1)"/><ellipse cx="956.7" cy="290.9" rx="15.9" ry="10.1" fill="#4f7a30" filter="url(#b1)"/><ellipse cx="988.5" cy="276.4" rx="6.4" ry="12.7" fill="#4f7a30" filter="url(#b1)"/><rect x="972.6" y="271.3" width="12.7" height="26.6" fill="#c4cace" rx="2"/><rect x="928.1" y="299.8" width="63.6" height="17.7" fill="#d9cbb8" /><ellipse cx="966.3" cy="311.2" rx="25.4" ry="6.3" fill="#ebe1d2" filter="url(#b1)"/><rect x="940.8" y="293.4" width="8.9" height="17.7" fill="#9a9684" /><rect x="929.4" y="296" width="10.2" height="2.5" fill="#5f5a4c" /><rect x="931.9" y="298.5" width="1.9" height="12.7" fill="#5f5a4c" /><ellipse cx="984.1" cy="298.5" rx="4.5" ry="3.2" fill="#3f642a" />
<rect x="928.1" y="254.2" width="63.6" height="63.3" fill="#10180a" filter="url(#tex)" opacity="0.36"/>
<rect x="928.1" y="254.2" width="63.6" height="63.3" fill="#fff" filter="url(#tex2)" opacity="0.2"/>
</g>
<clipPath id="pc9"><rect x="996.6" y="254.2" width="45.2" height="63.3"/></clipPath>
<g clip-path="url(#pc9)">
<rect x="996.6" y="254.2" width="45.2" height="63.3" fill="#b7a27c" /><rect x="996.6" y="254.2" width="45.2" height="11.4" fill="#8c6e46" /><polygon points="996.6,273.2 1041.8,255.5 1041.8,261.8 996.6,280.8" fill="#d9c59e"/><rect x="1000.2" y="254.2" width="2.7" height="10.1" fill="#5f4628" /><rect x="1009.3" y="254.2" width="2.7" height="8.9" fill="#5f4628" /><rect x="1018.3" y="254.2" width="2.7" height="7.7" fill="#5f4628" /><rect x="1027.3" y="254.2" width="2.7" height="6.5" fill="#5f4628" /><rect x="1036.4" y="254.2" width="2.7" height="5.3" fill="#5f4628" /><ellipse cx="1028.2" cy="285.9" rx="15.8" ry="12.7" fill="#cdbd9a" filter="url(#b2)"/><rect x="996.6" y="303.6" width="45.2" height="13.9" fill="#6d5636" /><rect x="998.9" y="298.5" width="40.7" height="3.2" fill="#4a3a22" /><rect x="1002" y="301.7" width="1.8" height="12.7" fill="#3a2c18" /><rect x="1030.5" y="301.7" width="1.8" height="12.7" fill="#3a2c18" /><rect x="1001.1" y="280.8" width="2.7" height="10.1" fill="#4a4a48" /><ellipse cx="1002.9" cy="292.2" rx="2.3" ry="3.2" fill="#6a8a3a" /><rect x="996.6" y="313.7" width="45.2" height="3.8" fill="#2c2418" />
<rect x="996.6" y="254.2" width="45.2" height="63.3" fill="#10180a" filter="url(#tex)" opacity="0.36"/>
<rect x="996.6" y="254.2" width="45.2" height="63.3" fill="#fff" filter="url(#tex2)" opacity="0.2"/>
</g>
</g>
</svg>
<div id="right">
  <!-- gen summary -->
  <svg style="left:10px;top:11px" width="18" height="18" viewBox="0 0 18 18" stroke="#5a4df3"><path class="s" d="M10 4.2 H3.4 A1.3 1.3 0 0 0 2.1 5.5 V14.3 A1.3 1.3 0 0 0 3.4 15.6 H13.2 A1.3 1.3 0 0 0 14.5 14.3 V8.8" stroke-width="1.2"/><path class="s" d="M4.8 7.4 H8.6 M4.8 10 H6.4 M4.8 12.6 H8" stroke-width="1.2"/><circle cx="9.2" cy="10" r="1" fill="#5a4df3" stroke="none"/><path d="M13.8 0.8 L14.7 3.1 L17 4 L14.7 4.9 L13.8 7.2 L12.9 4.9 L10.6 4 L12.9 3.1 Z" fill="#5a4df3" stroke="#5a4df3" stroke-width="0.5" stroke-linejoin="round"/></svg>
  <div style="position:absolute;left:9px;top:38.5px;width:20px;height:1px;background:#e2e2e2"></div>
  <!-- comments -->
  <svg style="left:10px;top:48px" width="17" height="17" viewBox="0 0 17 17"><path class="s" d="M4.8 4.2 A5.6 5.6 0 0 0 3 11.8 L2.6 14.2 H8.4 A5.6 5.6 0 0 0 12.8 12.6" stroke="#222" stroke-width="1.2"/><path class="s" d="M9.8 2 A5 5 0 0 1 14.8 7 V12 H9.8 A5 5 0 0 1 9.8 2 Z" stroke="#222" stroke-width="1.2"/><path class="s" d="M8 6 H12 M8 8.2 H11" stroke="#222" stroke-width="1"/></svg>
  <!-- bookmark -->
  <svg style="left:10px;top:79.5px" width="18" height="16" viewBox="0 0 18 16"><path class="s" d="M1.6 1.6 H9.6 V14 L5.6 10.6 L1.6 14 Z" stroke="#222" stroke-width="1.3"/><path class="s" d="M12 3.6 H16 M12 6 H16 M12 8.4 H16" stroke="#222" stroke-width="1"/></svg>
  <!-- pages -->
  <svg style="left:10px;top:111px" width="17" height="17" viewBox="0 0 17 17"><path class="s" d="M5 12.8 H3 A1.2 1.2 0 0 1 1.8 11.6 V3 A1.2 1.2 0 0 1 3 1.8 H8.6 A1.2 1.2 0 0 1 9.8 3 V4" stroke="#222" stroke-width="1.2"/><path class="s" d="M6.8 4.4 H11.6 L14.6 7.4 V14.4 A1.2 1.2 0 0 1 13.4 15.6 H6.8 A1.2 1.2 0 0 1 5.6 14.4 V5.6 A1.2 1.2 0 0 1 6.8 4.4 Z M11.4 4.6 V7.6 H14.4" stroke="#222" stroke-width="1.2"/></svg>
  <!-- page box -->
  <div style="position:absolute;left:6.5px;top:505.7px;width:26px;height:26px;border:1px solid #c6c6c6;border-radius:4px;font-size:11px;text-align:center;line-height:23px;color:#222">1</div>
  <div style="position:absolute;left:6.5px;top:537.5px;width:26px;font-size:11px;text-align:center;line-height:20px;color:#222">1</div>
  <svg style="left:14.5px;top:573px" width="11" height="8" viewBox="0 0 11 8"><path class="s" d="M1.6 6 L5.5 2 L9.4 6" stroke="#7d7d7d" stroke-width="1.4"/></svg>
  <svg style="left:14.5px;top:600px" width="11" height="8" viewBox="0 0 11 8"><path class="s" d="M1.6 2 L5.5 6 L9.4 2" stroke="#7d7d7d" stroke-width="1.4"/></svg>
  <div style="position:absolute;left:5.5px;top:618.5px;width:27px;height:1px;background:#e2e2e2"></div>
  <!-- rotate -->
  <svg style="left:12px;top:628px" width="16" height="16" viewBox="0 0 16 16"><path class="s" d="M13 5 A5.8 5.8 0 1 0 13.8 9.6" stroke="#222" stroke-width="1.4"/><path class="s" d="M13.6 1.6 V5.4 H9.8" stroke="#222" stroke-width="1.4"/></svg>
  <!-- fit width -->
  <svg style="left:11px;top:656px" width="18" height="17" viewBox="0 0 18 17"><path class="s" d="M3.4 1.4 Q9 4 14.6 1.4 M3.4 14.6 Q9 12 14.6 14.6" stroke="#222" stroke-width="1.3"/><path class="s" d="M1.4 8 H14.6 M3.8 5.8 L1.4 8 L3.8 10.2 M12.2 5.8 L14.6 8 L12.2 10.2" stroke="#222" stroke-width="1.2"/><path d="M17.2 12.6 V16.6 H13.2 Z" fill="#222"/></svg>
  <!-- zoom in -->
  <svg style="left:11.5px;top:685.5px" width="16" height="16" viewBox="0 0 16 16"><circle cx="6.6" cy="6.6" r="4.9" fill="none" stroke="#222" stroke-width="1.3"/><path class="s" d="M10.3 10.3 L14.4 14.4 M4.4 6.6 H8.8 M6.6 4.4 V8.8" stroke="#222" stroke-width="1.4"/></svg>
  <!-- zoom out -->
  <svg style="left:11.5px;top:714.5px" width="16" height="16" viewBox="0 0 16 16"><circle cx="6.6" cy="6.6" r="4.9" fill="none" stroke="#222" stroke-width="1.3"/><path class="s" d="M10.3 10.3 L14.4 14.4 M4.4 6.6 H8.8" stroke="#222" stroke-width="1.4"/></svg>
</div>
<!-- zoom popup -->
<div style="position:absolute;left:1155.7px;top:601.4px;width:57.5px;height:196.4px;background:#fff;border-radius:4px;box-shadow:0 1px 6px rgba(0,0,0,0.22),0 0 1px rgba(0,0,0,0.25)">
  <div style="position:absolute;left:0;top:12.6px;width:57.5px;text-align:center;font-size:9.5px;color:#222;letter-spacing:-0.65px">25,9%</div>
  <div style="position:absolute;left:6.5px;top:29px;width:44px;height:1px;background:#7ea3e6"></div>
  <div style="position:absolute;left:27.3px;top:40px;width:1.8px;height:125px;background:#c2c2c2"></div>
  <div style="position:absolute;left:24.3px;top:140.4px;width:8px;height:1px;background:#c8c8c8"></div>
  <div style="position:absolute;left:22.2px;top:167.8px;width:12.4px;height:12.4px;border-radius:50%;border:1.3px solid #5c5c5c;background:#fff"></div>
  <div style="position:absolute;left:27.8px;top:184.5px;width:1px;height:1.6px;background:#c8c8c8"></div>
</div>
</div>
</body>
</html>
